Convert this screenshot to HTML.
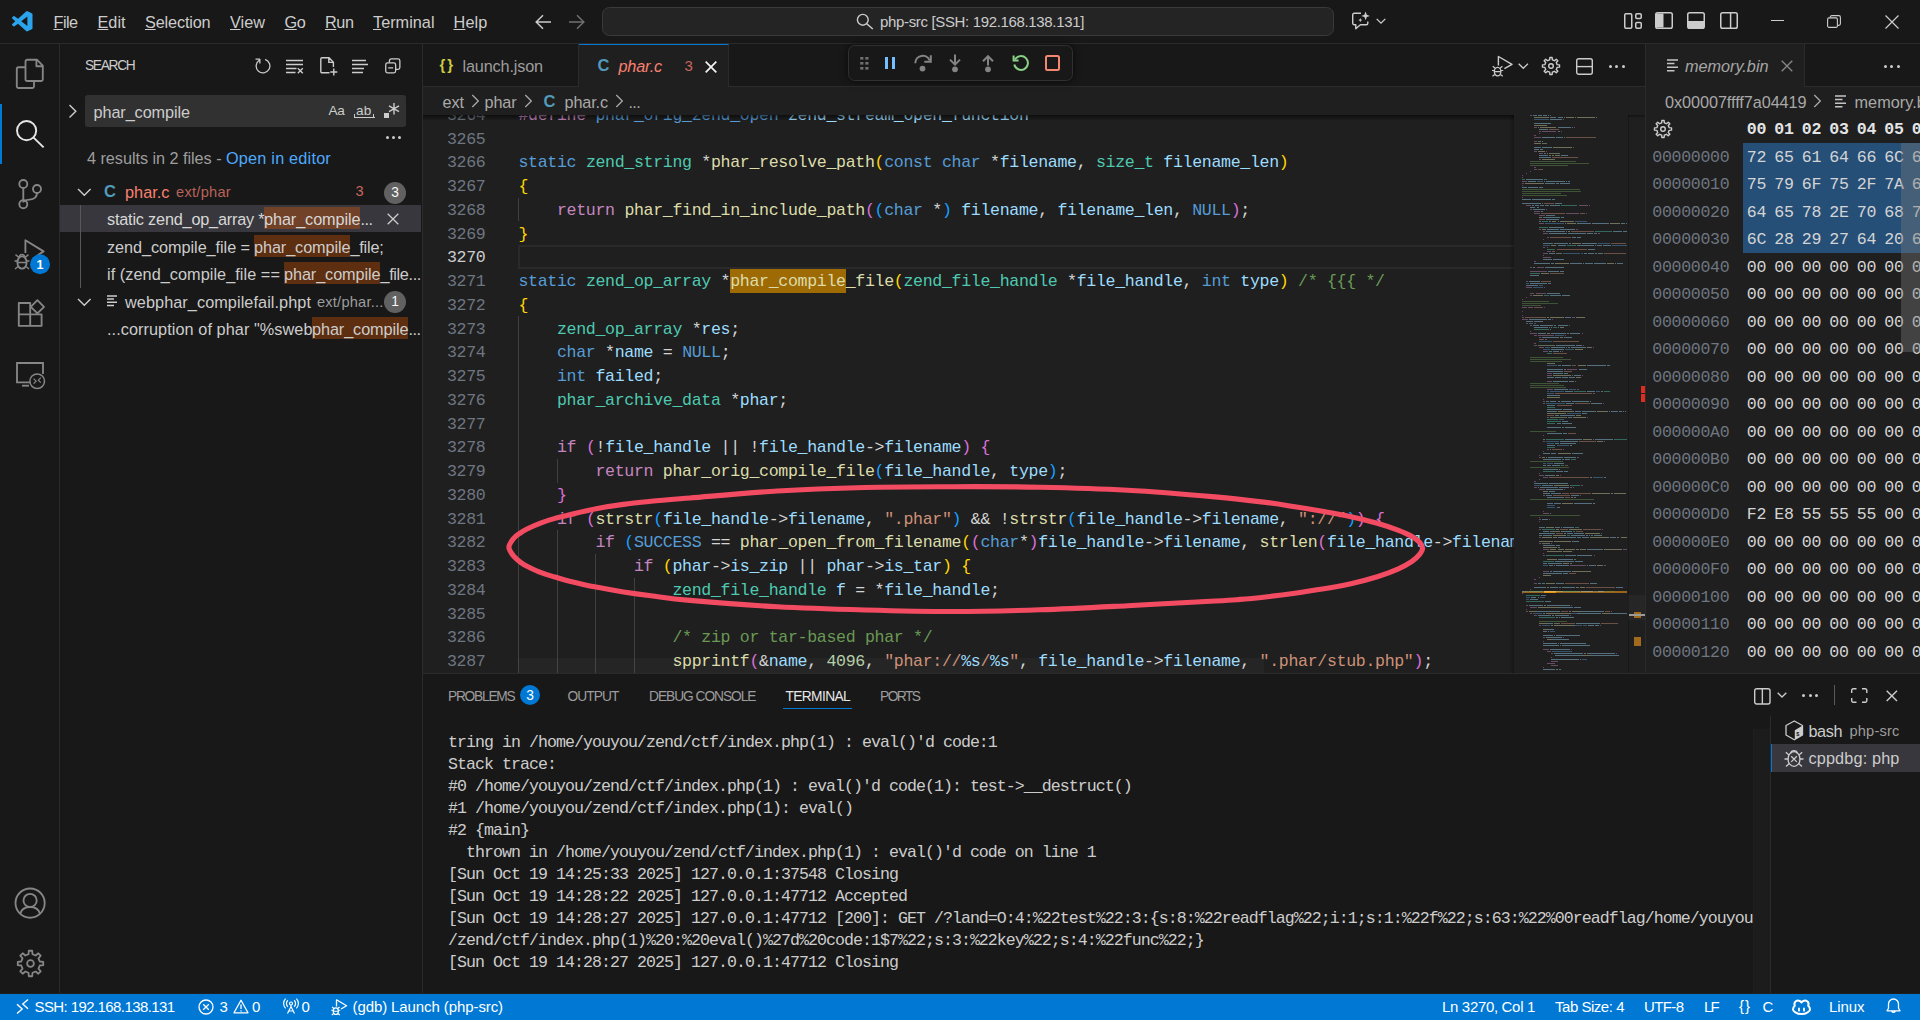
<!DOCTYPE html>
<html><head><meta charset="utf-8"><title>phar.c - php-src</title>
<style>
html,body{margin:0;padding:0;width:1920px;height:1020px;overflow:hidden;background:#1f1f1f}
body{font-family:"Liberation Sans",sans-serif;color:#ccc;font-size:16.25px;position:relative}
*{box-sizing:border-box}
.a{position:absolute}
.t{position:absolute;white-space:pre;height:28px;line-height:28px}
.m{font-family:"Liberation Mono",monospace}
svg{position:absolute;overflow:visible}
.k{color:#569cd6}.ty{color:#4ec9b0}.f{color:#dcdcaa}.v{color:#9cdcfe}.c{color:#c586c0}.s{color:#ce9178}.n{color:#b5cea8}.cm{color:#6a9955}
.b1{color:#ffd700}.b2{color:#da70d6}.b3{color:#179fff}
.ln{position:absolute;left:423px;width:62.5px;text-align:right;color:#6e7681}
.cl{position:absolute;left:518.5px;white-space:pre;color:#ccc}
.code{font-family:"Liberation Mono",monospace;font-size:16.6px;letter-spacing:-0.335px;line-height:23.75px}
.code div{height:23.75px}
</style></head><body>
<!-- TITLE BAR -->
<div class="a" style="left:0;top:0;width:1920px;height:44px;background:#181818;border-bottom:1px solid #2b2b2b"></div>
<svg style="left:12px;top:11px" width="20.5" height="20.5" viewBox="0 0 24 24"><path fill="#2aa4ec" d="M23.15 2.587L18.21.21a1.494 1.494 0 0 0-1.705.29l-9.46 8.63-4.12-3.128a.999.999 0 0 0-1.276.057L.327 7.261A1 1 0 0 0 .326 8.74L3.899 12 .326 15.26a1 1 0 0 0 .001 1.479L1.65 17.94a.999.999 0 0 0 1.276.057l4.12-3.128 9.46 8.63a1.492 1.492 0 0 0 1.704.29l4.942-2.377A1.5 1.5 0 0 0 24 20.06V3.939a1.5 1.5 0 0 0-.85-1.352zm-5.146 14.861L10.826 12l7.178-5.448v10.896z"></path></svg>
<span class="t" style="left: 53.5px; top: 8px; letter-spacing: -0.551px;"><u>F</u>ile</span>
<span class="t" style="left: 97.5px; top: 8px; letter-spacing: -0.004px;"><u>E</u>dit</span>
<span class="t" style="left: 145px; top: 8px; letter-spacing: -0.151px;"><u>S</u>election</span>
<span class="t" style="left: 230px; top: 8px; letter-spacing: 0.016px;"><u>V</u>iew</span>
<span class="t" style="left: 284.5px; top: 8px; letter-spacing: -0.344px;"><u>G</u>o</span>
<span class="t" style="left: 325px; top: 8px; letter-spacing: -0.443px;"><u>R</u>un</span>
<span class="t" style="left: 373px; top: 8px; letter-spacing: 0.012px;"><u>T</u>erminal</span>
<span class="t" style="left: 453.5px; top: 8px; letter-spacing: 0.141px;"><u>H</u>elp</span>
<!-- nav arrows -->
<svg style="left:535px;top:14px" width="17" height="16" viewBox="0 0 17 16"><path d="M1.2 8H16M8 1.2L1.2 8 8 14.8" fill="none" stroke="#ccc" stroke-width="1.5"></path></svg>
<svg style="left:567.5px;top:14px" width="17" height="16" viewBox="0 0 17 16"><path d="M1 8H15.8M9 1.2L15.8 8 9 14.8" fill="none" stroke="#707070" stroke-width="1.5"></path></svg>
<!-- command center -->
<div class="a" style="left:602px;top:7px;width:732px;height:29px;background:#242424;border:1px solid #3a3a3a;border-radius:7.5px"></div>
<svg style="left:856px;top:13px" width="18" height="17" viewBox="0 0 18 17"><circle cx="6.8" cy="6.8" r="5.4" fill="none" stroke="#ccc" stroke-width="1.4"></circle><path d="M10.7 10.7L16.8 16" stroke="#ccc" stroke-width="1.5" fill="none"></path></svg>
<span class="t" style="left: 880px; top: 7.5px; font-size: 15px; letter-spacing: -0.344px;">php-src [SSH: 192.168.138.131]</span>
<!-- copilot chat icon -->
<svg style="left:1351px;top:11px" width="20" height="20" viewBox="0 0 20 20"><path d="M10 2.2H3.2a1.5 1.5 0 0 0-1.5 1.5v8.6a1.5 1.5 0 0 0 1.5 1.5h1.6v3.9l4.6-3.9h5.9a1.5 1.5 0 0 0 1.5-1.5v-1.8" fill="none" stroke="#ccc" stroke-width="1.4" stroke-linejoin="round"></path><path d="M14.6 0.6l1.2 3.1 3.1 1.2-3.1 1.2-1.2 3.1-1.2-3.1-3.1-1.2 3.1-1.2z" fill="#ccc"></path><path d="M9.3 7l.6 1.5 1.5.6-1.5.6-.6 1.5-.6-1.5-1.5-.6 1.5-.6z" fill="#ccc"></path></svg>
<svg style="left:1376px;top:18px" width="10" height="7" viewBox="0 0 10 7"><path d="M.7.9L5 5.2 9.3.9" fill="none" stroke="#ccc" stroke-width="1.3"></path></svg>
<!-- layout controls -->
<svg style="left:1623.5px;top:12.5px" width="18" height="16" viewBox="0 0 18 16"><rect x=".75" y=".75" width="7" height="14.5" rx="1.2" fill="none" stroke="#ccc" stroke-width="1.5"></rect><rect x="11.75" y=".75" width="5.5" height="4.8" rx="1.2" fill="none" stroke="#ccc" stroke-width="1.5"></rect><rect x="11.75" y="9.4" width="5.5" height="5.8" rx="1.2" fill="none" stroke="#ccc" stroke-width="1.5"></rect></svg>
<svg style="left:1655px;top:11.8px" width="18" height="17" viewBox="0 0 18 17"><rect x=".75" y=".75" width="16.5" height="15.5" rx="1.8" fill="none" stroke="#ccc" stroke-width="1.5"></rect><path d="M1 1.5h7.5v14H1z" fill="#ccc"></path></svg>
<svg style="left:1687px;top:11.8px" width="18" height="17" viewBox="0 0 18 17"><rect x=".75" y=".75" width="16.5" height="15.5" rx="1.8" fill="none" stroke="#ccc" stroke-width="1.5"></rect><path d="M1 9h16v7H1z" fill="#ccc"></path></svg>
<svg style="left:1720px;top:11.8px" width="18" height="17" viewBox="0 0 18 17"><rect x=".75" y=".75" width="16.5" height="15.5" rx="1.8" fill="none" stroke="#ccc" stroke-width="1.5"></rect><path d="M10.6 1v15" stroke="#ccc" stroke-width="1.5"></path></svg>
<!-- window controls -->
<div class="a" style="left:1771px;top:20px;width:13px;height:1.3px;background:#ccc"></div>
<svg style="left:1826.5px;top:15px" width="14" height="13" viewBox="0 0 14 13"><rect x=".6" y="2.9" width="9.8" height="9.5" rx="1.5" fill="none" stroke="#ccc" stroke-width="1.1"></rect><path d="M3.2 2.6V2.2A1.6 1.6 0 0 1 4.8.6h7a1.6 1.6 0 0 1 1.6 1.6v6.6a1.6 1.6 0 0 1-1.6 1.6h-.9" fill="none" stroke="#ccc" stroke-width="1.1"></path></svg>
<svg style="left:1885px;top:15px" width="14" height="14" viewBox="0 0 14 14"><path d="M.5.5l13 13M13.5.5l-13 13" stroke="#ccc" stroke-width="1.2" fill="none"></path></svg>
<!-- ACTIVITY BAR -->
<div class="a" style="left:0;top:44px;width:60px;height:949px;background:#181818;border-right:1px solid #2b2b2b"></div>
<div class="a" style="left:0;top:104px;width:2px;height:60px;background:#0078d4"></div>
<!-- files -->
<svg style="left:14px;top:57px" width="32" height="34" viewBox="0 0 32 34"><path d="M11.5 9.5V4.5a1.8 1.8 0 0 1 1.8-1.8h9.6l5.9 5.9v13.6a1.8 1.8 0 0 1-1.8 1.8H13.3a1.8 1.8 0 0 1-1.8-1.8z M22.4 3v6.2h6.2" fill="none" stroke="#868686" stroke-width="1.85" stroke-linejoin="round"></path><path d="M11.3 10.2H4.6a1.8 1.8 0 0 0-1.8 1.8v17.2A1.8 1.8 0 0 0 4.6 31h13.6a1.8 1.8 0 0 0 1.8-1.8v-5" fill="none" stroke="#868686" stroke-width="1.85" stroke-linejoin="round"></path></svg>
<!-- search -->
<svg style="left:14px;top:118px" width="32" height="32" viewBox="0 0 32 32"><circle cx="12.6" cy="12.6" r="9.6" fill="none" stroke="#e7e7e7" stroke-width="1.9"></circle><path d="M19.6 19.6L29.6 29.4" stroke="#e7e7e7" stroke-width="1.9" fill="none"></path></svg>
<!-- scm -->
<svg style="left:14px;top:176px" width="32" height="36" viewBox="0 0 32 36"><circle cx="9.3" cy="8" r="4" fill="none" stroke="#868686" stroke-width="1.85"></circle><circle cx="9.3" cy="28.2" r="4" fill="none" stroke="#868686" stroke-width="1.85"></circle><circle cx="23" cy="13" r="4" fill="none" stroke="#868686" stroke-width="1.85"></circle><path d="M9.3 12v12.2M23 17c0 4.5-3 6.3-7.5 6.6-3.5.2-6.200 .9-6.200 3" fill="none" stroke="#868686" stroke-width="1.85"></path></svg>
<!-- debug -->
<svg style="left:12px;top:236px" width="40" height="40" viewBox="0 0 40 40"><path d="M13.4 17V4.200L31.600 15.400l-6 3.800" fill="none" stroke="#868686" stroke-width="1.85" stroke-linejoin="round"></path><ellipse cx="10" cy="26.500" rx="4.600" ry="6.200" fill="none" stroke="#868686" stroke-width="1.85"></ellipse><path d="M5.400 26.500h9.200M7 21.500l-3.500-2.800M13 21.500l3.500-2.800M5.400 25H2.500M14.600 25h2.900M6 30.500l-3 2.500M14 30.500l3 2.500M7.300 20.600a2.800 2.800 0 0 1 5.400 0" fill="none" stroke="#868686" stroke-width="1.5"></path><circle cx="28" cy="28.200" r="10" fill="#0078d4"></circle></svg>
<span class="t" style="left:30px;top:250.500px;width:20px;text-align:center;font-size:12.500px;font-weight:bold;color:#fff">1</span>
<!-- extensions -->
<svg style="left:16px;top:298px" width="30" height="30" viewBox="0 0 30 30"><path d="M2.800 5h11.400v11.400H2.800zM2.800 16.400h11.400v11.400H2.800zM14.200 16.400h11.400v11.400H14.200z" fill="none" stroke="#868686" stroke-width="1.85" stroke-linejoin="round"></path><path d="M21.400 2.200l6.600 6.600-6.600 6.600-6.600-6.600z" fill="none" stroke="#868686" stroke-width="1.85" stroke-linejoin="round"></path></svg>
<!-- remote explorer -->
<svg style="left:14px;top:360px" width="34" height="32" viewBox="0 0 34 32"><path d="M22 22.400H3V3h26v11" fill="none" stroke="#868686" stroke-width="1.85"></path><path d="M8 25.700h7" stroke="#868686" stroke-width="1.85"></path><circle cx="23.200" cy="21.200" r="7.300" fill="#181818" stroke="#868686" stroke-width="1.500"></circle><path d="M19.600 18.700l2.500 2.500-2.500 2.500M26.800 17.700l-2.500 2.500 2.500 2.500" fill="none" stroke="#868686" stroke-width="1.200"></path></svg>
<!-- account -->
<svg style="left:14px;top:887px" width="32" height="32" viewBox="0 0 32 32"><circle cx="16.100" cy="16.100" r="14.600" fill="none" stroke="#868686" stroke-width="1.850"></circle><circle cx="16.100" cy="13.400" r="6.600" fill="none" stroke="#868686" stroke-width="1.850"></circle><path d="M6.200 26.600c1.500-4.600 5.300-6.600 9.900-6.600s8.400 2 9.900 6.600" fill="none" stroke="#868686" stroke-width="1.850"></path></svg>
<!-- gear -->
<svg style="left:15.500px;top:948.500px" width="29" height="29" viewBox="0 0 30 30"><path d="M12.940 5.420 L13.230 1.820 L16.770 1.820 L17.060 5.420 L20.320 6.770 L23.070 4.430 L25.570 6.930 L23.230 9.680 L24.580 12.940 L28.180 13.230 L28.180 16.770 L24.580 17.060 L23.230 20.320 L25.570 23.070 L23.070 25.570 L20.320 23.230 L17.060 24.580 L16.770 28.180 L13.230 28.180 L12.940 24.580 L9.680 23.230 L6.930 25.570 L4.430 23.070 L6.770 20.320 L5.420 17.060 L1.820 16.770 L1.820 13.230 L5.420 12.940 L6.770 9.680 L4.430 6.930 L6.930 4.430 L9.680 6.770Z" fill="none" stroke="#868686" stroke-width="1.850" stroke-linejoin="round"></path><circle cx="15" cy="15" r="3.500" fill="none" stroke="#868686" stroke-width="1.850"></circle></svg>
<!-- SIDEBAR -->
<div class="a" style="left:60px;top:44px;width:363px;height:949px;background:#181818;border-right:1px solid #2b2b2b"></div>
<span class="t" style="left: 85px; top: 52px; font-size: 13.75px; letter-spacing: -1.302px;">SEARCH</span>
<!-- header icons -->
<svg style="left:253px;top:56px" width="20" height="20" viewBox="0 0 16 16"><path fill="#ccc" d="M4.681 3H2V2h3.5l.5.5V6H5V4a5 5 0 1 0 4.53-.761l.302-.954A6 6 0 1 1 4.681 3z"></path></svg>
<svg style="left:286px;top:59px" width="18" height="15" viewBox="0 0 18 15"><path d="M0 1.500h17M0 5.500h17M0 9.500h10.500M0 13.500h9.500M11.800 9.200l5 5M16.800 9.200l-5 5" fill="none" stroke="#ccc" stroke-width="1.400"></path></svg>
<svg style="left:320px;top:57px" width="18" height="19" viewBox="0 0 18 19"><path d="M9.500 15.800H2a1.200 1.200 0 0 1-1.200-1.200V2A1.200 1.200 0 0 1 2 .8h7l4.400 4.400V10M8.800 1v4.400h4.400M13.800 11.500v7M10.300 15h7" fill="none" stroke="#ccc" stroke-width="1.400"></path></svg>
<svg style="left:352px;top:59px" width="17" height="15" viewBox="0 0 17 15"><path d="M0 1.500h14M0 5.500h16M0 9.500h12M0 13.500h11" fill="none" stroke="#ccc" stroke-width="1.400"></path></svg>
<svg style="left:385px;top:58.300px" width="15.600" height="15.600" viewBox="0 0 17 17"><rect x=".8" y="5.400" width="10.800" height="10.800" rx="2" fill="none" stroke="#ccc" stroke-width="1.400"></rect><path d="M4.800 5V3A2 2 0 0 1 6.800 1h7.400a2 2 0 0 1 2 2v7.400a2 2 0 0 1-2 2h-2.200M3.500 10.800h5.400" fill="none" stroke="#ccc" stroke-width="1.400"></path></svg>
<!-- toggle chevron -->
<svg style="left:68px;top:104px" width="10" height="15" viewBox="0 0 10 15"><path d="M1.500 1l6.300 6.300L1.500 13.600" fill="none" stroke="#ccc" stroke-width="1.400"></path></svg>
<!-- input -->
<div class="a" style="left:85px;top:95px;width:321px;height:32px;background:#313131;border-radius:3px"></div>
<span class="t" style="left: 93.5px; top: 98px; letter-spacing: -0.089px;">phar_compile</span>
<span class="t" style="left: 328.5px; top: 97px; font-size: 13.6px; letter-spacing: -0.42px;">Aa</span>
<span class="t" style="left: 356px; top: 96.5px; font-size: 13.6px; letter-spacing: 0.188px;">ab</span>
<div class="a" style="left:353.500px;top:117px;width:21px;height:1.300px;background:#ccc"></div>
<div class="a" style="left:353.500px;top:113.500px;width:1.300px;height:4px;background:#ccc"></div>
<div class="a" style="left:373.200px;top:113.500px;width:1.300px;height:4px;background:#ccc"></div>
<div class="a" style="left:383.500px;top:113px;width:5px;height:5px;background:#ccc"></div>
<svg style="left:388px;top:103px" width="12" height="12" viewBox="0 0 12 12"><path d="M6 0v11.500M1 2.900l10 5.700M11 2.900L1 8.600" stroke="#ccc" stroke-width="1.400" fill="none"></path></svg>
<div class="a" style="left:385.500px;top:136px;width:3px;height:3px;border-radius:2px;background:#ccc"></div>
<div class="a" style="left:391.700px;top:136px;width:3px;height:3px;border-radius:2px;background:#ccc"></div>
<div class="a" style="left:397.900px;top:136px;width:3px;height:3px;border-radius:2px;background:#ccc"></div>
<!-- message -->
<span class="t" style="left: 87px; top: 143.5px; color: rgb(157, 157, 157); letter-spacing: -0.043px;">4 results in 2 files - </span>
<span class="t" style="left: 226px; top: 143.5px; color: rgb(77, 170, 252); letter-spacing: 0.208px;">Open in editor</span>
<!-- tree -->
<div class="a" style="left:60px;top:205px;width:361px;height:26.700px;background:#37373d"></div>
<div class="a" style="left:80px;top:205px;width:1px;height:82.500px;background:#585858"></div>
<svg style="left:77px;top:187.500px" width="15" height="9" viewBox="0 0 15 9"><path d="M1 1l6.300 6.300L13.600 1" fill="none" stroke="#ccc" stroke-width="1.400"></path></svg>
<span class="t" style="left: 104px; top: 176.5px; font-weight: bold; color: rgb(81, 154, 186); font-size: 16.5px; letter-spacing: -0.922px;">C</span>
<span class="t" style="left: 125px; top: 177.5px; color: rgb(248, 128, 112); letter-spacing: 0.036px;">phar.c</span>
<span class="t" style="left: 176px; top: 178px; color: rgb(184, 99, 90); font-size: 14.6px; letter-spacing: 0.283px;">ext/phar</span>
<span class="t" style="left: 355.5px; top: 176.5px; color: rgb(201, 103, 93); font-size: 14.6px; letter-spacing: 0.875px;">3</span>
<div class="a" style="left:384px;top:181.700px;width:22px;height:22px;border-radius:11px;background:#616161"></div>
<span class="t" style="left:384px;top:178.700px;width:22px;text-align:center;color:#f8f8f8;font-size:13.750px">3</span>
<!-- row1 -->
<div class="a" style="left:264px;top:207px;width:96px;height:22px;background:rgba(234,92,0,0.33)"></div>
<span class="t" style="left: 107px; top: 205px; color: rgb(215, 215, 215); letter-spacing: -0.191px;">static zend_op_array *</span>
<span class="t" style="left: 264px; top: 205px; color: rgb(215, 215, 215); letter-spacing: -0.089px;">phar_compile</span>
<span class="t" style="left: 360.5px; top: 205px; color: rgb(215, 215, 215); letter-spacing: -0.516px;">...</span>
<svg style="left:387px;top:213px" width="12" height="12" viewBox="0 0 12 12"><path d="M.7.7l10.600 10.600M11.300.7L.7 11.300" stroke="#ccc" stroke-width="1.300" fill="none"></path></svg>
<!-- row2 -->
<div class="a" style="left:254px;top:234.500px;width:96px;height:22px;background:rgba(234,92,0,0.33)"></div>
<span class="t" style="left: 107px; top: 232.5px; letter-spacing: -0.055px;">zend_compile_file = </span>
<span class="t" style="left: 254px; top: 232.5px; letter-spacing: -0.089px;">phar_compile</span>
<span class="t" style="left: 350.5px; top: 232.5px; letter-spacing: -0.221px;">_file;</span>
<!-- row3 -->
<div class="a" style="left:284px;top:262px;width:96px;height:22px;background:rgba(234,92,0,0.33)"></div>
<span class="t" style="left: 107px; top: 260px; letter-spacing: 0.054px;">if (zend_compile_file == </span>
<span class="t" style="left: 284px; top: 260px; letter-spacing: -0.089px;">phar_compile</span>
<span class="t" style="left: 380.5px; top: 260px; letter-spacing: -0.357px;">_file...</span>
<!-- row4 -->
<svg style="left:77px;top:297.500px" width="15" height="9" viewBox="0 0 15 9"><path d="M1 1l6.300 6.300L13.600 1" fill="none" stroke="#ccc" stroke-width="1.400"></path></svg>
<svg style="left:107px;top:295px" width="11" height="12" viewBox="0 0 11 12"><path d="M0 .9h10M0 4.100h7M0 7.300h10M0 10.500h7" stroke="#ccc" stroke-width="1.500" fill="none"></path></svg>
<span class="t" style="left: 125px; top: 287.5px; letter-spacing: 0.072px;">webphar_compilefail.phpt</span>
<span class="t" style="left: 317px; top: 288px; color: rgb(157, 157, 157); font-size: 14.6px; letter-spacing: 0.219px;">ext/phar...</span>
<div class="a" style="left:384px;top:291.400px;width:22px;height:22px;border-radius:11px;background:#616161"></div>
<span class="t" style="left:384px;top:288px;width:22px;text-align:center;color:#f8f8f8;font-size:13.750px">1</span>
<!-- row5 -->
<div class="a" style="left:312px;top:317px;width:96px;height:22px;background:rgba(234,92,0,0.33)"></div>
<span class="t" style="left: 107px; top: 315px; letter-spacing: 0.069px;">...corruption of phar "%sweb</span>
<span class="t" style="left: 312px; top: 315px; letter-spacing: -0.089px;">phar_compile</span>
<span class="t" style="left: 408.5px; top: 315px; letter-spacing: -0.516px;">...</span>
<!-- EDITOR GROUP 1 CHROME -->
<div class="a" style="left:423px;top:44px;width:1222px;height:43px;background:#181818;border-bottom:1px solid #2b2b2b"></div>
<div class="a" style="left:1645px;top:44px;width:1px;height:629px;background:#2b2b2b"></div>
<!-- tab launch.json -->
<div class="a" style="left:578px;top:44px;width:1px;height:42px;background:#2b2b2b"></div>
<span class="t" style="left:439.500px;top:50.500px;color:#cbcb41;font-weight:bold;font-size:15px;letter-spacing:1.800px">{}</span>
<span class="t" style="left: 462.5px; top: 52px; color: rgb(157, 157, 157); letter-spacing: -0.156px;">launch.json</span>
<!-- tab phar.c -->
<div class="a" style="left:579px;top:44px;width:150px;height:43px;background:#1f1f1f;border-top:1px solid #0078d4;border-right:1px solid #2b2b2b"></div>
<span class="t" style="left: 597.5px; top: 51px; font-weight: bold; color: rgb(81, 154, 186); font-size: 16.5px; letter-spacing: -0.922px;">C</span>
<span class="t" style="left: 618.5px; top: 52px; color: rgb(248, 128, 112); font-style: italic; letter-spacing: -0.177px;">phar.c</span>
<span class="t" style="left: 684.5px; top: 51.5px; color: rgb(201, 103, 93); font-size: 15px; letter-spacing: 0.656px;">3</span>
<svg style="left:705px;top:60.500px" width="12" height="12" viewBox="0 0 12 12"><path d="M.7.7l10.600 10.600M11.300.7L.7 11.300" stroke="#f4f4f4" stroke-width="1.700" fill="none"></path></svg>
<!-- debug toolbar -->
<div class="a" style="left:848px;top:44.500px;width:225px;height:36.500px;background:#181818;border:1px solid #303030;border-radius:6.500px;box-shadow:0 0 7px 1px rgba(0,0,0,0.5)"></div>
<svg style="left:859.500px;top:57px" width="9" height="13" viewBox="0 0 9 13"><g fill="#6f6f6f"><rect x=".2" y="0" width="3.200" height="2.600"></rect><rect x="5.300" y="0" width="3.200" height="2.600"></rect><rect x=".2" y="5" width="3.200" height="2.600"></rect><rect x="5.300" y="5" width="3.200" height="2.600"></rect><rect x=".2" y="10" width="3.200" height="2.600"></rect><rect x="5.300" y="10" width="3.200" height="2.600"></rect></g></svg>
<div class="a" style="left:885.200px;top:57px;width:2.600px;height:12px;background:#75beff"></div>
<div class="a" style="left:892.400px;top:57px;width:2.600px;height:12px;background:#75beff"></div>
<!-- step over -->
<svg style="left:913px;top:53px" width="20" height="20" viewBox="0 0 20 20"><path d="M2.300 10.200A7.400 7.400 0 0 1 16.600 7.500" fill="none" stroke="#848484" stroke-width="2"></path><path d="M17.800 2.300v6.500h-6.500" fill="none" stroke="#848484" stroke-width="2"></path><circle cx="9.500" cy="15.600" r="2.900" fill="#848484"></circle></svg>
<!-- step into -->
<svg style="left:947.750px;top:53px" width="14" height="20" viewBox="0 0 14 20"><path d="M7 1.500v9.500M2 6.600L7 11.600l5-5" fill="none" stroke="#848484" stroke-width="2"></path><circle cx="7" cy="16.300" r="2.900" fill="#848484"></circle></svg>
<!-- step out -->
<svg style="left:980.500px;top:53px" width="14" height="20" viewBox="0 0 14 20"><path d="M7 12.600V3.200M2 8.200L7 3.200l5 5" fill="none" stroke="#848484" stroke-width="2"></path><circle cx="7" cy="16.300" r="2.900" fill="#848484"></circle></svg>
<!-- restart -->
<svg style="left:1010.500px;top:53px" width="20" height="20" viewBox="0 0 20 20"><path d="M4 6.600A6.900 6.900 0 1 1 3.300 11.500" fill="none" stroke="#89d185" stroke-width="2"></path><path d="M2.600 2.600v5h5" fill="none" stroke="#89d185" stroke-width="2"></path></svg>
<!-- stop -->
<div class="a" style="left:1044.750px;top:55px;width:15.500px;height:15.700px;border:2px solid #f48771;border-radius:2.500px"></div>
<!-- editor actions -->
<svg style="left:1490px;top:54px" width="24" height="24" viewBox="0 0 24 24"><path d="M8.400 11.500V2.500L22 10.300l-7.600 4.400" fill="none" stroke="#ccc" stroke-width="1.400" stroke-linejoin="round"></path><ellipse cx="7.600" cy="17.600" rx="3.300" ry="4.300" fill="none" stroke="#ccc" stroke-width="1.300"></ellipse><path d="M4.300 17.600h6.600M5.200 14.200l-2.400-2M10 14.200l2.400-2M4.300 16.500H2M10.900 16.500h2.300M4.800 20.500l-2.300 1.800M10.400 20.500l2.300 1.800" fill="none" stroke="#ccc" stroke-width="1.200"></path></svg>
<svg style="left:1517.500px;top:62.500px" width="11" height="7" viewBox="0 0 11 7"><path d="M.7.7l4.600 4.600L9.900.7" fill="none" stroke="#ccc" stroke-width="1.300"></path></svg>
<svg style="left:1541.250px;top:56px" width="20" height="20" viewBox="0 0 20 20"><path d="M8.670 3.840 L8.860 1.480 L11.140 1.480 L11.330 3.840 L13.420 4.710 L15.220 3.160 L16.840 4.780 L15.290 6.580 L16.160 8.670 L18.520 8.860 L18.520 11.140 L16.160 11.330 L15.290 13.420 L16.840 15.220 L15.220 16.840 L13.420 15.290 L11.330 16.160 L11.140 18.520 L8.860 18.520 L8.670 16.160 L6.580 15.290 L4.780 16.840 L3.160 15.220 L4.710 13.420 L3.840 11.330 L1.480 11.140 L1.480 8.860 L3.840 8.670 L4.710 6.580 L3.160 4.780 L4.780 3.160 L6.580 4.710Z" fill="none" stroke="#ccc" stroke-width="1.400" stroke-linejoin="round"></path><circle cx="10" cy="10" r="2.300" fill="none" stroke="#ccc" stroke-width="1.400"></circle></svg>
<svg style="left:1576px;top:58px" width="17" height="17" viewBox="0 0 17 17"><rect x=".7" y=".7" width="15.600" height="15.600" rx="2" fill="none" stroke="#ccc" stroke-width="1.400"></rect><path d="M.7 8.600h15.600" stroke="#ccc" stroke-width="1.400"></path></svg>
<div class="a" style="left:1608.500px;top:64.500px;width:3px;height:3px;border-radius:2px;background:#ccc"></div>
<div class="a" style="left:1615px;top:64.500px;width:3px;height:3px;border-radius:2px;background:#ccc"></div>
<div class="a" style="left:1621.500px;top:64.500px;width:3px;height:3px;border-radius:2px;background:#ccc"></div>
<!-- breadcrumbs -->
<span class="t" style="left: 442.5px; top: 87.8px; color: rgb(169, 169, 169); letter-spacing: -0.063px;">ext</span>
<svg style="left:470.500px;top:94.300px" width="9" height="14" viewBox="0 0 9 14"><path d="M1.300 1l6 6-6 6" fill="none" stroke="#a9a9a9" stroke-width="1.300"></path></svg>
<span class="t" style="left: 484.5px; top: 87.8px; color: rgb(169, 169, 169); letter-spacing: -0.133px;">phar</span>
<svg style="left:523.500px;top:94.300px" width="9" height="14" viewBox="0 0 9 14"><path d="M1.300 1l6 6-6 6" fill="none" stroke="#a9a9a9" stroke-width="1.300"></path></svg>
<span class="t" style="left: 543.5px; top: 86.8px; font-weight: bold; color: rgb(81, 154, 186); font-size: 16.5px; letter-spacing: -0.922px;">C</span>
<span class="t" style="left: 564.5px; top: 87.8px; color: rgb(169, 169, 169); letter-spacing: -0.13px;">phar.c</span>
<svg style="left:614.500px;top:94.300px" width="9" height="14" viewBox="0 0 9 14"><path d="M1.300 1l6 6-6 6" fill="none" stroke="#a9a9a9" stroke-width="1.300"></path></svg>
<span class="t" style="left: 628.5px; top: 87.8px; color: rgb(169, 169, 169); letter-spacing: -0.682px;">...</span>
<!-- CODE AREA -->
<div class="a code" style="left:423px;top:115px;width:1091px;height:558px;overflow:hidden;background:#1f1f1f">
<div class="a" style="left:95px;top:130.00px;width:1000px;height:23.75px;border:2px solid #2a2a2a;border-right:none"></div>
<div class="a" style="left:306.75px;top:153.75px;width:116.00px;height:23.75px;background:#9e6a03"></div>
<div class="a" style="left:95.00px;top:82.50px;width:1px;height:23.75px;background:#404040"></div>
<div class="a" style="left:95.00px;top:201.25px;width:1px;height:380.00px;background:#404040"></div>
<div class="a" style="left:133.50px;top:343.75px;width:1px;height:23.75px;background:#404040"></div>
<div class="a" style="left:133.50px;top:415.00px;width:1px;height:166.25px;background:#404040"></div>
<div class="a" style="left:172.00px;top:438.75px;width:1px;height:142.50px;background:#404040"></div>
<div class="a" style="left:210.50px;top:462.50px;width:1px;height:118.75px;background:#404040"></div>
<div class="a" style="left:95px;top:543px;width:746px;height:15px;background:rgba(121,121,121,0.08)"></div>
<div class="ln" style="left:0;top:-11.25px;color:#6e7681">3264</div>
<div class="cl" style="left:95.5px;top:-11.25px;color:#d4d4d4"><span class="c">#define</span> <span class="k">phar_orig_zend_open</span> <span class="v">zend_stream_open_function</span></div>
<div class="ln" style="left:0;top:12.50px;color:#6e7681">3265</div>
<div class="ln" style="left:0;top:36.25px;color:#6e7681">3266</div>
<div class="cl" style="left:95.5px;top:36.25px;color:#d4d4d4"><span class="k">static</span> <span class="ty">zend_string</span> *<span class="f">phar_resolve_path</span><span class="b1">(</span><span class="k">const</span> <span class="k">char</span> *<span class="v">filename</span>, <span class="ty">size_t</span> <span class="v">filename_len</span><span class="b1">)</span></div>
<div class="ln" style="left:0;top:60.00px;color:#6e7681">3267</div>
<div class="cl" style="left:95.5px;top:60.00px;color:#d4d4d4"><span class="b1">{</span></div>
<div class="ln" style="left:0;top:83.75px;color:#6e7681">3268</div>
<div class="cl" style="left:95.5px;top:83.75px;color:#d4d4d4">    <span class="c">return</span> <span class="f">phar_find_in_include_path</span><span class="b2">(</span><span class="b3">(</span><span class="k">char</span> *<span class="b3">)</span> <span class="v">filename</span>, <span class="v">filename_len</span>, <span class="k">NULL</span><span class="b2">)</span>;</div>
<div class="ln" style="left:0;top:107.50px;color:#6e7681">3269</div>
<div class="cl" style="left:95.5px;top:107.50px;color:#d4d4d4"><span class="b1">}</span></div>
<div class="ln" style="left:0;top:131.25px;color:#ccc">3270</div>
<div class="ln" style="left:0;top:155.00px;color:#6e7681">3271</div>
<div class="cl" style="left:95.5px;top:155.00px;color:#d4d4d4"><span class="k">static</span> <span class="ty">zend_op_array</span> *<span class="f">phar_compile</span><span class="f">_file</span><span class="b1">(</span><span class="ty">zend_file_handle</span> *<span class="v">file_handle</span>, <span class="k">int</span> <span class="v">type</span><span class="b1">)</span> <span class="cm">/* {{{ */</span></div>
<div class="ln" style="left:0;top:178.75px;color:#6e7681">3272</div>
<div class="cl" style="left:95.5px;top:178.75px;color:#d4d4d4"><span class="b1">{</span></div>
<div class="ln" style="left:0;top:202.50px;color:#6e7681">3273</div>
<div class="cl" style="left:95.5px;top:202.50px;color:#d4d4d4">    <span class="ty">zend_op_array</span> *<span class="v">res</span>;</div>
<div class="ln" style="left:0;top:226.25px;color:#6e7681">3274</div>
<div class="cl" style="left:95.5px;top:226.25px;color:#d4d4d4">    <span class="k">char</span> *<span class="v">name</span> = <span class="k">NULL</span>;</div>
<div class="ln" style="left:0;top:250.00px;color:#6e7681">3275</div>
<div class="cl" style="left:95.5px;top:250.00px;color:#d4d4d4">    <span class="k">int</span> <span class="v">failed</span>;</div>
<div class="ln" style="left:0;top:273.75px;color:#6e7681">3276</div>
<div class="cl" style="left:95.5px;top:273.75px;color:#d4d4d4">    <span class="ty">phar_archive_data</span> *<span class="v">phar</span>;</div>
<div class="ln" style="left:0;top:297.50px;color:#6e7681">3277</div>
<div class="ln" style="left:0;top:321.25px;color:#6e7681">3278</div>
<div class="cl" style="left:95.5px;top:321.25px;color:#d4d4d4">    <span class="c">if</span> <span class="b2">(</span>!<span class="v">file_handle</span> || !<span class="v">file_handle</span>-&gt;<span class="v">filename</span><span class="b2">)</span> <span class="b2">{</span></div>
<div class="ln" style="left:0;top:345.00px;color:#6e7681">3279</div>
<div class="cl" style="left:95.5px;top:345.00px;color:#d4d4d4">        <span class="c">return</span> <span class="f">phar_orig_compile_file</span><span class="b3">(</span><span class="v">file_handle</span>, <span class="v">type</span><span class="b3">)</span>;</div>
<div class="ln" style="left:0;top:368.75px;color:#6e7681">3280</div>
<div class="cl" style="left:95.5px;top:368.75px;color:#d4d4d4">    <span class="b2">}</span></div>
<div class="ln" style="left:0;top:392.50px;color:#6e7681">3281</div>
<div class="cl" style="left:95.5px;top:392.50px;color:#d4d4d4">    <span class="c">if</span> <span class="b2">(</span><span class="f">strstr</span><span class="b3">(</span><span class="v">file_handle</span>-&gt;<span class="v">filename</span>, <span class="s">".phar"</span><span class="b3">)</span> &amp;&amp; !<span class="f">strstr</span><span class="b3">(</span><span class="v">file_handle</span>-&gt;<span class="v">filename</span>, <span class="s">"://"</span><span class="b3">)</span><span class="b2">)</span> <span class="b2">{</span></div>
<div class="ln" style="left:0;top:416.25px;color:#6e7681">3282</div>
<div class="cl" style="left:95.5px;top:416.25px;color:#d4d4d4">        <span class="c">if</span> <span class="b3">(</span><span class="k">SUCCESS</span> == <span class="f">phar_open_from_filename</span><span class="b1">(</span><span class="b2">(</span><span class="k">char</span>*<span class="b2">)</span><span class="v">file_handle</span>-&gt;<span class="v">filename</span>, <span class="f">strlen</span><span class="b2">(</span><span class="v">file_handle</span>-&gt;<span class="v">filename</span><span class="b2">)</span>, <span class="k">NULL</span>, 0, &amp;<span class="v">phar</span>, <span class="k">NULL</span><span class="b1">)</span><span class="b3">)</span> <span class="b3">{</span></div>
<div class="ln" style="left:0;top:440.00px;color:#6e7681">3283</div>
<div class="cl" style="left:95.5px;top:440.00px;color:#d4d4d4">            <span class="c">if</span> <span class="b1">(</span><span class="v">phar</span>-&gt;<span class="v">is_zip</span> || <span class="v">phar</span>-&gt;<span class="v">is_tar</span><span class="b1">)</span> <span class="b1">{</span></div>
<div class="ln" style="left:0;top:463.75px;color:#6e7681">3284</div>
<div class="cl" style="left:95.5px;top:463.75px;color:#d4d4d4">                <span class="ty">zend_file_handle</span> <span class="v">f</span> = *<span class="v">file_handle</span>;</div>
<div class="ln" style="left:0;top:487.50px;color:#6e7681">3285</div>
<div class="ln" style="left:0;top:511.25px;color:#6e7681">3286</div>
<div class="cl" style="left:95.5px;top:511.25px;color:#d4d4d4">                <span class="cm">/* zip or tar-based phar */</span></div>
<div class="ln" style="left:0;top:535.00px;color:#6e7681">3287</div>
<div class="cl" style="left:95.5px;top:535.00px;color:#d4d4d4">                <span class="f">spprintf</span><span class="b2">(</span>&amp;<span class="v">name</span>, <span class="n">4096</span>, <span class="s">"phar://</span><span class="v">%s</span><span class="s">/</span><span class="v">%s</span><span class="s">"</span>, <span class="v">file_handle</span>-&gt;<span class="v">filename</span>, <span class="s">".phar/stub.php"</span><span class="b2">)</span>;</div>
<div class="ln" style="left:0;top:558.75px;color:#6e7681">3288</div>
<div class="a" style="left:0;top:0;width:1091px;height:6px;background:linear-gradient(#000,rgba(0,0,0,0));opacity:.55"></div>
</div>
<!-- MINIMAP -->
<div class="a" style="left:1509px;top:115px;width:5px;height:558px;background:linear-gradient(90deg,rgba(0,0,0,0),rgba(0,0,0,.3))"></div>
<div class="a" style="left:1514px;top:115px;width:131px;height:558px;background:#1f1f1f"></div>
<div class="a" style="left:1521.8px;top:591px;width:105.5px;height:2.2px;background:#9a6518"></div>
<div class="a" style="left:1543.7px;top:591px;width:12.5px;height:2.2px;background:#e8940c"></div>
<svg style="left:0;top:0" width="1920" height="1020" viewBox="0 0 1920 1020" shape-rendering="crispEdges">
<path d="M1521.8 591.5h6.3M1594.2 591.5h3.2M1526.0 597.5h4.2M1539.6 597.5h5.2M1526.0 599.5h3.2M1533.3 613.5h8.4M1571.1 613.5h6.3M1541.7 625.5h8.4M1575.3 625.5h6.3M1582.7 625.5h4.2M1550.1 631.5h5.2M1552.2 651.5h19.9M1581.6 659.5h5.2M1534.4 119.6h14.7M1536.5 181.6h6.3M1575.3 221.6h11.6M1544.9 223.6h18.9M1598.4 243.6h11.6M1542.8 245.6h7.4M1612.1 245.6h14.4M1562.7 253.6h16.8M1580.6 253.6h2.1M1526.0 283.6h3.2M1538.6 285.6h4.2M1533.3 287.6h9.5M1555.4 335.6h8.4M1538.6 341.6h13.7M1544.9 347.6h5.2M1542.8 349.6h7.4M1564.8 349.6h9.5M1547.0 365.6h9.5M1569.0 389.6h7.4M1547.0 391.6h2.1M1550.1 391.6h13.7M1596.3 391.6h3.2M1547.0 393.6h7.4M1545.9 403.6h18.9M1567.0 413.6h13.7M1558.5 419.6h5.2M1545.9 441.6h12.6M1547.0 443.6h7.4M1556.5 445.6h12.6M1542.8 463.6h3.2M1547.0 463.6h6.3M1593.2 477.6h9.5M1534.4 485.6h6.3M1547.0 505.6h8.4M1547.0 507.6h8.4M1542.8 565.6h5.2" stroke="#569cd6" stroke-opacity=".43" stroke-width="1.25" fill="none"></path>
<path d="M1529.1 591.5h13.7M1562.8 591.5h16.8M1526.0 595.5h13.7M1526.0 601.5h17.9M1538.6 617.5h16.8M1521.8 179.6h3.2M1543.8 179.6h3.2M1560.6 205.6h16.8M1541.7 221.6h6.3M1538.6 227.6h9.5M1595.3 231.6h16.8M1566.9 245.6h9.5M1547.0 249.6h8.4M1530.2 273.6h9.5M1543.8 295.6h5.2M1529.1 323.6h4.2M1553.3 327.6h3.2M1534.4 329.6h14.7M1547.0 353.6h5.2M1574.3 391.6h11.6M1603.7 391.6h6.3M1547.0 407.6h8.4M1547.0 419.6h10.5M1547.0 421.6h13.7M1547.0 423.6h8.4M1545.9 439.6h17.9M1614.2 439.6h12.3M1547.0 447.6h8.4M1571.1 459.6h5.2M1560.6 465.6h3.2M1542.8 471.6h12.6M1570.1 485.6h9.5M1575.3 527.6h3.2M1541.7 529.6h13.7M1573.2 531.6h2.1M1600.5 533.6h1.1M1566.9 535.6h3.2M1545.9 555.6h17.9M1542.8 561.6h11.6" stroke="#4ec9b0" stroke-opacity=".43" stroke-width="1.25" fill="none"></path>
<path d="M1543.8 591.5h18.9M1537.5 607.5h23.1M1529.1 611.5h7.4M1572.2 611.5h8.4M1545.9 613.5h25.2M1601.6 613.5h7.4M1538.6 623.5h9.5M1554.3 625.5h21.0M1542.8 629.5h5.2M1547.0 639.5h5.2M1582.7 655.5h7.4M1534.4 117.6h14.7M1565.9 117.6h8.4M1577.4 117.6h17.9M1534.4 125.6h12.6M1539.6 127.6h16.8M1541.7 141.6h1.1M1534.4 143.6h6.3M1553.3 147.6h18.9M1537.5 151.6h7.4M1552.2 155.6h2.1M1555.4 155.6h4.2M1541.7 159.6h13.7M1524.9 183.6h18.9M1538.6 217.6h3.2M1552.2 221.6h4.2M1559.6 221.6h14.7M1566.9 223.6h9.5M1610.0 223.6h9.5M1541.7 229.6h4.2M1572.2 243.6h8.4M1551.2 245.6h5.2M1555.4 263.6h13.7M1606.8 263.6h7.4M1540.7 273.6h8.4M1533.3 295.6h9.5M1547.0 317.6h2.1M1550.1 317.6h13.7M1576.4 317.6h8.4M1559.6 327.6h4.2M1547.0 333.6h3.2M1559.6 337.6h3.2M1586.9 347.6h5.2M1575.3 349.6h7.4M1547.0 363.6h8.4M1577.5 365.6h8.4M1553.3 375.6h17.9M1576.4 377.6h4.2M1547.0 397.6h12.6M1590.0 401.6h1.1M1557.5 411.6h16.8M1597.4 411.6h10.5M1547.0 413.6h18.9M1576.4 415.6h4.2M1573.2 417.6h12.6M1582.7 439.6h9.5M1597.4 441.6h5.2M1570.1 445.6h2.1M1557.5 453.6h13.7M1541.7 457.6h3.2M1556.4 475.6h2.1M1554.3 485.6h14.7M1542.8 491.6h5.2M1592.1 493.6h17.9M1614.2 493.6h11.6M1561.7 503.6h11.6M1545.9 527.6h8.4M1556.4 529.6h2.1M1569.0 529.6h12.6M1584.8 533.6h14.7M1553.3 535.6h12.6M1541.7 537.6h10.5M1553.3 537.6h3.2M1590.0 537.6h18.9M1620.5 537.6h6.0M1538.6 541.6h14.7M1554.3 541.6h16.8M1542.8 547.6h13.7M1550.1 549.6h6.3M1557.5 549.6h6.3M1564.8 549.6h10.5M1579.5 549.6h6.3M1603.7 549.6h17.9M1547.0 551.6h14.7M1562.8 551.6h9.5M1547.0 559.6h9.5M1562.8 563.6h6.3M1597.4 565.6h5.2M1572.2 571.6h18.9M1542.8 575.6h8.4M1545.9 583.6h9.5M1547.0 587.6h2.1M1579.5 587.6h5.2" stroke="#dcdcaa" stroke-opacity=".43" stroke-width="1.25" fill="none"></path>
<path d="M1580.6 591.5h12.6M1598.4 591.5h5.2M1540.7 595.5h5.2M1531.2 597.5h5.2M1530.2 599.5h7.4M1544.9 601.5h6.3M1529.1 605.5h13.7M1547.0 605.5h23.1M1560.6 607.5h12.6M1574.3 607.5h6.3M1536.5 611.5h23.1M1580.6 611.5h23.1M1577.4 613.5h23.1M1608.9 613.5h17.6M1537.5 615.5h13.7M1555.4 615.5h13.7M1556.4 617.5h1.1M1560.6 617.5h13.7M1548.0 623.5h5.2M1576.4 623.5h23.1M1587.9 625.5h6.3M1595.3 625.5h3.2M1548.0 629.5h6.3M1542.8 631.5h4.2M1542.8 635.5h10.5M1556.4 635.5h23.1M1545.9 637.5h15.8M1552.2 639.5h16.8M1542.8 643.5h13.7M1559.6 643.5h26.2M1542.8 645.5h15.8M1561.7 645.5h28.4M1550.1 649.5h19.9M1554.3 653.5h28.4M1586.9 653.5h28.4M1555.4 655.5h27.3M1590.0 655.5h29.4M1551.2 659.5h27.3M1542.8 669.5h12.6M1558.5 669.5h2.1M1533.3 115.6h3.2M1537.5 115.6h4.2M1542.8 115.6h4.2M1548.0 115.6h1.1M1550.1 117.6h6.3M1557.5 117.6h5.2M1596.3 117.6h1.1M1550.1 119.6h11.6M1534.4 123.6h16.8M1557.5 127.6h13.7M1538.6 129.6h9.5M1557.5 131.6h2.1M1541.7 137.6h13.7M1556.4 137.6h6.3M1537.5 141.6h3.2M1534.4 147.6h6.3M1541.7 147.6h10.5M1534.4 149.6h4.2M1539.6 149.6h3.2M1543.8 153.6h2.1M1538.6 155.6h9.5M1560.6 155.6h7.4M1538.6 157.6h12.6M1526.0 179.6h16.8M1528.1 181.6h7.4M1545.9 181.6h18.9M1568.0 181.6h2.1M1544.9 183.6h10.5M1559.6 183.6h10.5M1521.8 187.6h5.2M1528.1 187.6h9.5M1538.6 187.6h4.2M1521.8 199.6h9.5M1532.3 199.6h18.9M1552.2 199.6h3.2M1521.8 203.6h18.9M1555.4 203.6h6.3M1535.4 205.6h3.2M1539.6 205.6h4.2M1544.9 205.6h4.2M1550.1 205.6h9.5M1530.2 207.6h5.2M1536.5 207.6h2.1M1533.3 209.6h11.6M1540.7 211.6h2.1M1545.9 215.6h9.5M1542.8 217.6h16.8M1560.6 217.6h3.2M1545.9 219.6h12.6M1538.6 221.6h2.1M1549.1 221.6h2.1M1577.4 223.6h13.7M1592.1 223.6h16.8M1620.5 223.6h4.2M1549.1 227.6h14.7M1547.0 229.6h11.6M1559.6 229.6h15.8M1545.9 231.6h18.9M1613.1 231.6h8.4M1622.6 231.6h3.9M1549.1 233.6h17.9M1568.0 233.6h17.9M1586.9 233.6h6.3M1594.2 233.6h3.2M1572.2 237.6h4.2M1577.4 237.6h3.2M1542.8 243.6h10.5M1554.3 243.6h13.7M1569.0 243.6h2.1M1581.6 243.6h15.8M1557.5 245.6h8.4M1577.4 245.6h16.8M1597.4 245.6h4.2M1602.6 245.6h8.4M1588.0 249.6h7.4M1549.1 253.6h6.3M1583.7 253.6h3.2M1587.9 253.6h6.3M1598.4 253.6h4.2M1542.8 259.6h9.5M1553.3 259.6h10.5M1534.4 263.6h15.8M1551.2 263.6h3.2M1570.1 263.6h11.6M1584.8 263.6h8.4M1594.2 263.6h11.6M1617.3 263.6h5.2M1544.9 267.6h18.9M1548.0 271.6h10.5M1559.6 271.6h4.2M1530.2 275.6h8.4M1529.1 281.6h10.5M1530.2 283.6h16.8M1548.0 283.6h3.2M1526.0 285.6h11.6M1547.0 293.6h12.6M1550.1 295.6h10.5M1561.7 295.6h8.4M1564.8 317.6h6.3M1529.1 319.6h17.9M1548.0 319.6h3.2M1526.0 321.6h7.4M1534.4 321.6h8.4M1533.3 325.6h5.2M1539.6 325.6h13.7M1554.3 325.6h2.1M1557.5 325.6h10.5M1534.4 327.6h13.7M1550.1 329.6h1.1M1537.5 333.6h8.4M1551.2 333.6h14.7M1570.1 333.6h9.5M1541.7 337.6h16.8M1563.8 337.6h8.4M1556.4 345.6h18.9M1576.4 345.6h5.2M1551.2 347.6h13.7M1571.1 347.6h14.7M1551.2 349.6h12.6M1549.1 351.6h3.2M1553.3 351.6h5.2M1557.5 365.6h3.2M1561.7 365.6h9.5M1586.9 365.6h18.9M1606.9 365.6h3.2M1547.0 369.6h15.8M1578.5 369.6h8.4M1547.0 371.6h15.8M1553.3 373.6h9.5M1563.8 373.6h4.2M1574.3 375.6h6.3M1547.0 377.6h7.4M1555.4 377.6h5.2M1561.7 377.6h6.3M1569.0 377.6h6.3M1553.3 381.6h14.7M1569.0 381.6h5.2M1554.3 389.6h13.7M1564.8 391.6h8.4M1586.9 391.6h8.4M1547.0 395.6h12.6M1545.9 401.6h3.2M1550.1 401.6h6.3M1560.6 401.6h10.5M1572.2 401.6h16.8M1565.9 403.6h8.4M1591.1 403.6h10.5M1547.0 405.6h8.4M1547.0 409.6h14.7M1562.8 409.6h9.5M1547.0 411.6h9.5M1575.3 411.6h5.2M1581.6 411.6h14.7M1611.0 411.6h7.4M1619.4 411.6h2.1M1581.7 413.6h5.2M1555.4 415.6h3.2M1559.6 415.6h15.8M1568.0 417.6h4.2M1561.7 421.6h6.3M1556.5 423.6h4.2M1561.7 423.6h10.5M1547.0 427.6h13.7M1561.7 427.6h2.1M1564.8 427.6h11.6M1547.0 433.6h14.7M1562.8 433.6h4.2M1564.8 439.6h16.8M1595.3 439.6h17.9M1559.6 441.6h17.9M1555.4 443.6h3.2M1559.6 443.6h16.8M1547.0 445.6h8.4M1542.8 453.6h7.4M1551.2 453.6h5.2M1572.2 453.6h10.5M1548.0 457.6h14.7M1563.8 457.6h12.6M1542.8 459.6h17.9M1561.7 459.6h2.1M1564.8 459.6h5.2M1554.3 463.6h9.5M1542.8 465.6h3.2M1547.0 465.6h4.2M1552.2 465.6h7.4M1542.8 469.6h14.7M1556.4 471.6h6.3M1563.8 471.6h4.2M1544.9 475.6h10.5M1603.7 477.6h2.1M1534.4 483.6h13.7M1549.1 483.6h18.9M1541.7 485.6h11.6M1539.6 487.6h17.9M1558.5 487.6h10.5M1545.9 489.6h16.8M1549.1 491.6h6.3M1542.8 493.6h7.4M1551.2 493.6h9.5M1611.0 493.6h2.1M1545.9 495.6h6.3M1571.1 495.6h7.4M1547.0 497.6h16.8M1574.3 497.6h2.1M1547.0 503.6h6.3M1554.3 503.6h6.3M1574.3 503.6h17.9M1556.5 507.6h3.2M1550.1 513.6h1.1M1541.7 519.6h6.3M1538.6 527.6h6.3M1555.4 527.6h4.2M1562.7 527.6h11.6M1542.8 531.6h6.3M1560.6 531.6h11.6M1538.6 533.6h16.8M1566.9 533.6h6.3M1574.3 533.6h9.5M1538.6 535.6h3.2M1542.8 535.6h9.5M1571.1 535.6h13.7M1585.8 535.6h2.1M1591.1 535.6h2.1M1594.2 535.6h7.4M1557.5 537.6h18.9M1577.4 537.6h3.2M1581.6 537.6h7.4M1610.0 537.6h6.3M1572.2 541.6h6.3M1542.8 545.6h12.6M1556.4 545.6h3.2M1557.5 547.6h2.1M1586.9 549.6h15.8M1564.8 555.6h11.6M1577.4 555.6h14.7M1557.5 559.6h15.8M1555.4 561.6h18.9M1575.3 561.6h7.4M1542.8 563.6h4.2M1548.0 563.6h13.7M1549.1 565.6h4.2M1556.4 565.6h12.6M1589.0 565.6h7.4M1550.1 571.6h2.1M1553.3 571.6h17.9M1542.8 573.6h18.9M1562.8 573.6h5.2M1537.5 583.6h3.2M1541.7 583.6h3.2M1556.4 583.6h7.4M1590.0 583.6h7.4M1534.4 587.6h11.6M1550.1 587.6h7.4M1558.5 587.6h2.1M1561.7 587.6h13.7M1616.3 587.6h6.3" stroke="#9cdcfe" stroke-opacity=".43" stroke-width="1.25" fill="none"></path>
<path d="M1526.0 605.5h2.1M1530.2 607.5h6.3M1526.0 611.5h2.1M1530.2 613.5h2.1M1534.4 615.5h2.1M1538.6 625.5h2.1M1542.8 637.5h2.1M1542.8 649.5h6.3M1547.0 651.5h4.2M1551.2 653.5h2.1M1551.2 661.5h6.3M1547.0 663.5h8.4M1551.2 665.5h6.3M1530.2 115.6h2.1M1534.4 127.6h2.1M1538.6 131.6h2.1M1541.7 131.6h14.7M1534.4 137.6h6.3M1534.4 141.6h2.1M1534.4 151.6h2.1M1538.6 153.6h4.2M1538.6 159.6h2.1M1534.4 169.6h2.1M1521.8 181.6h5.2M1521.8 183.6h2.1M1526.0 205.6h5.2M1578.5 205.6h9.5M1530.2 209.6h2.1M1534.4 211.6h5.2M1534.4 213.6h5.2M1565.9 213.6h12.6M1538.6 215.6h6.3M1538.6 219.6h6.3M1538.6 223.6h5.2M1538.6 229.6h2.1M1542.8 231.6h2.1M1542.8 233.6h5.2M1547.0 237.6h2.1M1542.8 247.6h2.1M1547.0 251.6h4.2M1542.8 253.6h5.2M1542.8 257.6h8.4M1530.2 267.6h2.1M1536.5 267.6h7.4M1530.2 271.6h16.8M1526.0 281.6h2.1M1526.0 287.6h6.3M1530.2 293.6h4.2M1535.5 293.6h10.5M1530.2 295.6h2.1M1521.8 307.6h5.2M1528.1 307.6h5.2M1521.8 317.6h2.1M1572.2 317.6h3.2M1521.8 319.6h6.3M1526.0 323.6h2.1M1530.2 325.6h2.1M1530.2 333.6h6.3M1534.4 335.6h2.1M1537.5 335.6h16.8M1538.6 337.6h2.1M1544.9 339.6h2.1M1534.4 345.6h2.1M1538.6 347.6h5.2M1542.8 351.6h5.2M1566.9 369.6h10.5M1547.0 373.6h5.2M1547.0 375.6h5.2M1547.0 381.6h5.2M1547.0 389.6h6.3M1542.8 401.6h2.1M1542.8 403.6h2.1M1547.0 417.6h2.1M1542.8 441.6h2.1M1547.0 449.6h2.1M1538.6 457.6h2.1M1538.6 475.6h5.2M1542.8 477.6h5.2M1580.6 485.6h2.1M1534.4 487.6h2.1M1538.6 489.6h6.3M1542.8 495.6h2.1M1542.8 513.6h6.3M1538.6 519.6h2.1M1538.6 529.6h2.1M1538.6 537.6h2.1M1538.6 543.6h2.1M1542.8 549.6h6.3M1622.6 549.6h3.9M1542.8 555.6h2.1M1570.1 565.6h15.8M1603.7 565.6h2.1M1542.8 571.6h6.3M1534.4 583.6h2.1" stroke="#c586c0" stroke-opacity=".43" stroke-width="1.25" fill="none"></path>
<path d="M1560.6 611.5h7.4M1604.7 611.5h5.2M1560.6 623.5h14.7M1600.5 623.5h17.9M1562.7 119.6h1.1M1549.1 129.6h9.5M1565.9 137.6h30.5M1573.2 147.6h1.1M1552.2 157.6h26.2M1537.5 169.6h5.2M1543.8 203.6h10.5M1540.7 213.6h24.2M1579.5 213.6h5.2M1571.1 231.6h23.1M1550.1 237.6h21.0M1611.0 243.6h14.7M1556.5 249.6h30.5M1552.2 251.6h3.2M1603.7 253.6h22.1M1550.2 273.6h13.7M1540.7 281.6h10.5M1534.4 307.6h8.4M1524.9 317.6h21.0M1538.6 339.6h5.2M1553.3 341.6h25.2M1553.3 353.6h13.7M1572.2 365.6h4.2M1563.8 371.6h8.4M1575.3 381.6h1.1M1555.4 393.6h36.8M1593.2 393.6h2.1M1575.3 403.6h14.7M1556.5 405.6h15.8M1547.0 415.6h7.4M1568.0 433.6h8.4M1578.5 441.6h17.9M1552.2 449.6h9.5M1564.8 465.6h3.2M1549.1 477.6h39.9M1570.1 487.6h2.1M1561.7 493.6h7.4M1570.1 493.6h21.0M1553.3 495.6h16.8M1564.8 497.6h5.2M1559.6 529.6h8.4M1582.7 529.6h17.9M1576.4 531.6h6.3M1556.4 533.6h6.3M1569.0 573.6h7.4M1564.8 583.6h24.2M1585.8 587.6h29.4" stroke="#ce9178" stroke-opacity=".43" stroke-width="1.25" fill="none"></path>
<path d="M1554.3 623.5h5.2M1541.7 143.6h5.2M1549.1 153.6h10.5M1556.4 253.6h5.2M1537.5 345.6h17.9M1550.1 417.6h16.8M1550.1 531.6h9.5M1541.7 543.6h8.4M1574.3 559.6h2.1M1570.1 563.6h2.1" stroke="#b5cea8" stroke-opacity=".43" stroke-width="1.25" fill="none"></path>
<path d="M1604.7 591.5h9.5M1538.6 621.5h28.4M1530.2 161.6h46.2M1530.2 163.6h58.8M1530.2 165.6h37.8M1521.8 189.6h57.8M1521.8 191.6h58.8M1521.8 193.6h38.9M1521.8 195.6h45.1M1521.8 301.6h27.3M1521.8 303.6h35.7M1521.8 305.6h18.9M1530.2 357.6h32.6M1530.2 359.6h41.0M1530.2 361.6h31.5M1530.2 383.6h28.4M1530.2 385.6h33.6M1530.2 387.6h35.7M1530.2 431.6h26.2M1530.2 461.6h32.6M1530.2 467.6h38.9M1530.2 499.6h64.0M1530.2 515.6h49.4" stroke="#6a9955" stroke-opacity=".43" stroke-width="1.25" fill="none"></path>
<path d="M1537.5 597.5h1.1M1543.8 605.5h2.1M1569.0 611.5h2.1M1542.8 613.5h2.1M1552.2 615.5h2.1M1558.5 617.5h1.1M1551.2 625.5h2.1M1548.0 631.5h1.1M1554.3 635.5h1.1M1557.5 643.5h1.1M1559.6 645.5h1.1M1583.7 653.5h2.1M1579.5 659.5h1.1M1556.4 669.5h1.1M1563.8 117.6h1.1M1575.3 117.6h1.1M1537.5 127.6h1.1M1572.2 127.6h1.1M1563.8 137.6h1.1M1547.0 153.6h1.1M1549.1 155.6h2.1M1543.8 181.6h1.1M1565.9 181.6h1.1M1556.4 183.6h2.1M1541.8 203.6h1.1M1532.3 205.6h2.1M1557.5 221.6h1.1M1564.8 223.6h1.1M1625.7 223.6h0.8M1565.9 231.6h1.1M1568.0 231.6h2.1M1595.3 245.6h1.1M1595.3 253.6h2.1M1582.7 263.6h1.1M1615.2 263.6h1.1M1533.3 267.6h2.1M1549.1 327.6h1.1M1551.2 327.6h1.1M1557.5 327.6h1.1M1567.0 333.6h2.1M1565.9 347.6h1.1M1568.0 347.6h2.1M1559.6 351.6h1.1M1563.8 369.6h2.1M1572.2 375.6h1.1M1600.5 391.6h2.1M1557.5 401.6h2.1M1608.9 411.6h1.1M1622.6 411.6h1.1M1624.7 411.6h1.1M1542.8 439.6h2.1M1593.2 439.6h1.1M1550.1 449.6h1.1M1545.9 457.6h1.1M1558.5 469.6h1.1M1590.0 477.6h2.1M1537.5 487.6h1.1M1571.1 497.6h2.1M1593.2 503.6h2.1M1560.6 527.6h1.1M1563.8 533.6h2.1M1589.0 535.6h1.1M1617.3 537.6h2.1M1576.4 549.6h2.1M1554.3 565.6h1.1M1586.9 565.6h1.1M1576.4 587.6h2.1" stroke="#d4d4d4" stroke-opacity=".43" stroke-width="1.25" fill="none"></path>
<path d="M1521.8 593.5h1.1M1571.1 605.5h1.1M1526.0 609.5h1.1M1611.0 611.5h1.1M1570.1 615.5h1.1M1599.5 625.5h1.1M1562.7 637.5h1.1M1542.8 641.5h1.1M1571.1 649.5h1.1M1616.3 653.5h1.1M1551.2 657.5h1.1M1542.8 667.5h1.1M1550.1 115.6h1.1M1574.3 127.6h1.1M1560.6 131.6h1.1M1538.6 133.6h1.1M1534.4 135.6h1.1M1545.9 151.6h1.1M1534.4 167.6h1.1M1530.2 171.6h1.1M1526.0 173.6h1.1M1521.8 175.6h1.1M1521.8 177.6h1.1M1521.8 185.6h1.1M1521.8 197.6h1.1M1589.0 205.6h1.1M1545.9 209.6h1.1M1585.8 213.6h1.1M1576.4 229.6h1.1M1598.4 233.6h1.1M1542.8 239.6h1.1M1547.0 247.6h1.1M1542.8 255.6h1.1M1534.4 261.6h1.1M1543.8 287.6h1.1M1526.0 297.6h1.1M1521.8 299.6h1.1M1543.8 307.6h1.1M1521.8 311.6h1.1M1521.8 315.6h1.1M1552.2 319.6h1.1M1534.4 323.6h1.1M1569.0 325.6h1.1M1530.2 331.6h1.1M1581.6 333.6h1.1M1564.8 335.6h1.1M1534.4 343.6h1.1M1582.7 345.6h1.1M1593.2 347.6h1.1M1561.7 351.6h1.1M1581.6 375.6h1.1M1577.4 389.6h1.1M1542.8 399.6h1.1M1602.6 403.6h1.1M1586.9 417.6h1.1M1542.8 435.6h1.1M1603.7 441.6h1.1M1562.7 449.6h1.1M1542.8 451.6h1.1M1538.6 455.6h1.1M1577.4 457.6h1.1M1538.6 473.6h1.1M1559.6 475.6h1.1M1538.6 479.6h1.1M1534.4 481.6h1.1M1573.2 487.6h1.1M1563.8 489.6h1.1M1579.5 495.6h1.1M1542.8 511.6h1.1M1538.6 517.6h1.1M1549.1 519.6h1.1M1538.6 521.6h1.1M1601.6 529.6h1.1M1551.2 543.6h1.1M1542.8 553.6h1.1M1594.2 555.6h1.1M1538.6 577.6h1.1M1534.4 579.6h1.1M1530.2 589.6h1.1" stroke="#da70d6" stroke-opacity=".43" stroke-width="1.25" fill="none"></path>
</svg>
<div class="a" style="left:1628px;top:595px;width:17px;height:25px;background:rgba(255,255,255,.035)"></div>
<div class="a" style="left:1640.5px;top:385.5px;width:4.5px;height:7px;background:#e02c20"></div>
<div class="a" style="left:1640.5px;top:394px;width:4.5px;height:7.5px;background:#e02c20"></div>
<div class="a" style="left:1634.2px;top:612px;width:6.5px;height:6px;background:#a26a1d"></div>
<div class="a" style="left:1634.2px;top:636.8px;width:6.5px;height:9.2px;background:#a26a1d"></div>
<div class="a" style="left:1629px;top:614px;width:16px;height:2px;background:#9c9c96"></div>
<div class="a" style="left:1628px;top:115px;width:17px;height:3px;background:linear-gradient(rgba(0,0,0,.4),rgba(0,0,0,0))"></div>
<div class="a" style="left:1627.5px;top:115px;width:1px;height:558px;background:rgba(0,0,0,.22)"></div>
<!-- RED ELLIPSE ANNOTATION -->
<svg style="left:0;top:0" width="1920" height="1020" viewBox="0 0 1920 1020"><path d="M508.9 547.3C508.9 544.3 511.8 540.7 513.7 538.3C515.7 535.9 518.3 534.4 520.6 532.8C522.9 531.2 524.1 530.4 527.5 528.7C530.9 527.0 536.6 524.5 541.2 522.8C545.8 521.1 550.3 519.7 554.9 518.4C559.5 517.1 561.7 516.6 568.6 515.0C575.5 513.4 587.0 510.6 596.1 508.8C605.2 507.0 614.4 505.6 623.5 504.4C632.6 503.1 639.9 502.4 651.0 501.3C662.1 500.2 668.9 499.7 690.0 498.0C711.1 496.3 748.3 492.8 777.5 491.0C806.7 489.2 835.8 488.2 865.0 487.5C894.2 486.8 923.3 486.8 952.5 486.7C981.7 486.6 1010.8 486.6 1040.0 487.2C1069.2 487.8 1098.3 488.6 1127.5 490.2C1156.7 491.8 1191.7 494.8 1215.0 496.9C1238.3 499.0 1254.2 501.0 1267.5 502.6C1280.8 504.2 1285.8 505.4 1294.9 506.8C1304.1 508.2 1313.2 509.7 1322.4 511.3C1331.6 512.9 1340.7 514.4 1349.8 516.4C1358.9 518.4 1369.3 520.9 1377.3 523.2C1385.3 525.5 1392.2 527.9 1397.9 530.1C1403.6 532.3 1407.9 534.2 1411.6 536.3C1415.2 538.4 1418.0 540.5 1419.8 542.5C1421.6 544.5 1422.6 546.1 1422.6 548.0C1422.6 549.9 1421.6 551.8 1419.8 554.1C1418.0 556.4 1415.2 559.2 1411.6 561.7C1407.9 564.2 1403.6 566.7 1397.9 569.2C1392.2 571.7 1385.3 574.3 1377.3 576.8C1369.3 579.3 1358.9 582.0 1349.8 584.0C1340.7 586.0 1331.6 587.6 1322.4 589.1C1313.2 590.6 1304.1 591.9 1294.9 593.2C1285.8 594.5 1276.7 595.7 1267.5 596.7C1258.3 597.7 1248.8 598.7 1240.0 599.4C1231.2 600.1 1233.8 600.0 1215.0 601.0C1196.2 602.0 1156.7 604.2 1127.5 605.7C1098.3 607.2 1069.2 608.8 1040.0 609.8C1010.8 610.8 981.7 611.5 952.5 611.5C923.3 611.5 894.2 610.8 865.0 610.0C835.8 609.2 806.7 608.4 777.5 606.8C748.3 605.2 711.1 602.2 690.0 600.4C668.9 598.5 662.1 597.1 651.0 595.7C639.9 594.3 632.6 593.3 623.5 591.9C614.4 590.5 605.2 588.9 596.1 587.1C587.0 585.3 575.5 582.6 568.6 580.9C561.7 579.2 559.5 578.4 554.9 577.0C550.3 575.6 545.8 574.5 541.2 572.7C536.6 571.0 530.9 568.2 527.5 566.5C524.1 564.8 522.9 564.1 520.6 562.4C518.3 560.7 515.7 558.7 513.7 556.2C511.8 553.7 508.9 550.3 508.9 547.3Z" fill="none" stroke="#f34c62" stroke-width="5.1" stroke-linejoin="round"></path></svg>
<!-- EDITOR GROUP 2: memory.bin hex editor -->
<div class="a" style="left:1646px;top:44px;width:274px;height:43px;background:#181818;border-bottom:1px solid #2b2b2b"></div>
<div class="a" style="left:1646px;top:44px;width:159px;height:43px;background:#1f1f1f;border-right:1px solid #2b2b2b"></div>
<svg style="left:1666.5px;top:59px" width="12" height="13" viewBox="0 0 12 13"><path d="M0 1h11M0 4.6h7.5M0 8.2h11M0 11.8h7.5" stroke="#c5c5c5" stroke-width="1.5" fill="none"></path></svg>
<span class="t" style="left: 1685px; top: 52px; color: rgb(166, 166, 166); font-style: italic; letter-spacing: -0.019px;">memory.bin</span>
<svg style="left:1781px;top:60px" width="12" height="12" viewBox="0 0 12 12"><path d="M.7.7l10.6 10.6M11.3.7L.7 11.3" stroke="#8a8a8a" stroke-width="1.3" fill="none"></path></svg>
<div class="a" style="left:1883.5px;top:64.5px;width:3px;height:3px;border-radius:2px;background:#ccc"></div>
<div class="a" style="left:1890px;top:64.5px;width:3px;height:3px;border-radius:2px;background:#ccc"></div>
<div class="a" style="left:1896.5px;top:64.5px;width:3px;height:3px;border-radius:2px;background:#ccc"></div>
<span class="t" style="left: 1665px; top: 87.8px; color: rgb(169, 169, 169); letter-spacing: -0.072px;">0x00007ffff7a04419</span>
<svg style="left:1812.5px;top:94.3px" width="9" height="14" viewBox="0 0 9 14"><path d="M1.3 1l6 6-6 6" fill="none" stroke="#a9a9a9" stroke-width="1.3"></path></svg>
<svg style="left:1835px;top:95.3px" width="12" height="13" viewBox="0 0 12 13"><path d="M0 1h11M0 4.6h7.5M0 8.2h11M0 11.8h7.5" stroke="#c5c5c5" stroke-width="1.5" fill="none"></path></svg>
<span class="t" style="left: 1854.5px; top: 87.8px; color: rgb(169, 169, 169); letter-spacing: 0.031px;">memory.bin</span>
<svg style="left:1652.5px;top:119px" width="20" height="20" viewBox="0 0 20 20"><path d="M8.67 3.84 L8.86 1.48 L11.14 1.48 L11.33 3.84 L13.42 4.71 L15.22 3.16 L16.84 4.78 L15.29 6.58 L16.16 8.67 L18.52 8.86 L18.52 11.14 L16.16 11.33 L15.29 13.42 L16.84 15.22 L15.22 16.84 L13.42 15.29 L11.33 16.16 L11.14 18.52 L8.86 18.52 L8.67 16.16 L6.58 15.29 L4.78 16.84 L3.16 15.22 L4.71 13.42 L3.84 11.33 L1.48 11.14 L1.48 8.86 L3.84 8.67 L4.71 6.58 L3.16 4.78 L4.78 3.16 L6.58 4.71Z" fill="none" stroke="#ccc" stroke-width="1.4" stroke-linejoin="round"></path><circle cx="10" cy="10" r="2.3" fill="none" stroke="#ccc" stroke-width="1.4"></circle></svg>
<div class="a" style="left:1743px;top:143px;width:177px;height:110px;background:#264f78"></div>
<span class="t m" style="left:1746.8px;top:116.00px;font-size:16.6px;letter-spacing:-0.335px;font-weight:bold;color:#e4e4e4">00</span>
<span class="t m" style="left:1774.3px;top:116.00px;font-size:16.6px;letter-spacing:-0.335px;font-weight:bold;color:#e4e4e4">01</span>
<span class="t m" style="left:1801.8px;top:116.00px;font-size:16.6px;letter-spacing:-0.335px;font-weight:bold;color:#e4e4e4">02</span>
<span class="t m" style="left:1829.3px;top:116.00px;font-size:16.6px;letter-spacing:-0.335px;font-weight:bold;color:#e4e4e4">03</span>
<span class="t m" style="left:1856.8px;top:116.00px;font-size:16.6px;letter-spacing:-0.335px;font-weight:bold;color:#e4e4e4">04</span>
<span class="t m" style="left:1884.3px;top:116.00px;font-size:16.6px;letter-spacing:-0.335px;font-weight:bold;color:#e4e4e4">05</span>
<span class="t m" style="left:1911.8px;top:116.00px;font-size:16.6px;letter-spacing:-0.335px;font-weight:bold;color:#e4e4e4">06</span>
<span class="t m" style="left:1652.3px;top:143.60px;font-size:16.6px;letter-spacing:-0.335px;color:#6e7681">00000000</span>
<span class="t m" style="left:1746.8px;top:143.60px;font-size:16.6px;letter-spacing:-0.335px;color:#d4d4d4">72</span>
<span class="t m" style="left:1774.3px;top:143.60px;font-size:16.6px;letter-spacing:-0.335px;color:#d4d4d4">65</span>
<span class="t m" style="left:1801.8px;top:143.60px;font-size:16.6px;letter-spacing:-0.335px;color:#d4d4d4">61</span>
<span class="t m" style="left:1829.3px;top:143.60px;font-size:16.6px;letter-spacing:-0.335px;color:#d4d4d4">64</span>
<span class="t m" style="left:1856.8px;top:143.60px;font-size:16.6px;letter-spacing:-0.335px;color:#d4d4d4">66</span>
<span class="t m" style="left:1884.3px;top:143.60px;font-size:16.6px;letter-spacing:-0.335px;color:#d4d4d4">6C</span>
<span class="t m" style="left:1911.8px;top:143.60px;font-size:16.6px;letter-spacing:-0.335px;color:#d4d4d4">61</span>
<span class="t m" style="left:1652.3px;top:171.10px;font-size:16.6px;letter-spacing:-0.335px;color:#6e7681">00000010</span>
<span class="t m" style="left:1746.8px;top:171.10px;font-size:16.6px;letter-spacing:-0.335px;color:#d4d4d4">75</span>
<span class="t m" style="left:1774.3px;top:171.10px;font-size:16.6px;letter-spacing:-0.335px;color:#d4d4d4">79</span>
<span class="t m" style="left:1801.8px;top:171.10px;font-size:16.6px;letter-spacing:-0.335px;color:#d4d4d4">6F</span>
<span class="t m" style="left:1829.3px;top:171.10px;font-size:16.6px;letter-spacing:-0.335px;color:#d4d4d4">75</span>
<span class="t m" style="left:1856.8px;top:171.10px;font-size:16.6px;letter-spacing:-0.335px;color:#d4d4d4">2F</span>
<span class="t m" style="left:1884.3px;top:171.10px;font-size:16.6px;letter-spacing:-0.335px;color:#d4d4d4">7A</span>
<span class="t m" style="left:1911.8px;top:171.10px;font-size:16.6px;letter-spacing:-0.335px;color:#d4d4d4">65</span>
<span class="t m" style="left:1652.3px;top:198.60px;font-size:16.6px;letter-spacing:-0.335px;color:#6e7681">00000020</span>
<span class="t m" style="left:1746.8px;top:198.60px;font-size:16.6px;letter-spacing:-0.335px;color:#d4d4d4">64</span>
<span class="t m" style="left:1774.3px;top:198.60px;font-size:16.6px;letter-spacing:-0.335px;color:#d4d4d4">65</span>
<span class="t m" style="left:1801.8px;top:198.60px;font-size:16.6px;letter-spacing:-0.335px;color:#d4d4d4">78</span>
<span class="t m" style="left:1829.3px;top:198.60px;font-size:16.6px;letter-spacing:-0.335px;color:#d4d4d4">2E</span>
<span class="t m" style="left:1856.8px;top:198.60px;font-size:16.6px;letter-spacing:-0.335px;color:#d4d4d4">70</span>
<span class="t m" style="left:1884.3px;top:198.60px;font-size:16.6px;letter-spacing:-0.335px;color:#d4d4d4">68</span>
<span class="t m" style="left:1911.8px;top:198.60px;font-size:16.6px;letter-spacing:-0.335px;color:#d4d4d4">70</span>
<span class="t m" style="left:1652.3px;top:226.10px;font-size:16.6px;letter-spacing:-0.335px;color:#6e7681">00000030</span>
<span class="t m" style="left:1746.8px;top:226.10px;font-size:16.6px;letter-spacing:-0.335px;color:#d4d4d4">6C</span>
<span class="t m" style="left:1774.3px;top:226.10px;font-size:16.6px;letter-spacing:-0.335px;color:#d4d4d4">28</span>
<span class="t m" style="left:1801.8px;top:226.10px;font-size:16.6px;letter-spacing:-0.335px;color:#d4d4d4">29</span>
<span class="t m" style="left:1829.3px;top:226.10px;font-size:16.6px;letter-spacing:-0.335px;color:#d4d4d4">27</span>
<span class="t m" style="left:1856.8px;top:226.10px;font-size:16.6px;letter-spacing:-0.335px;color:#d4d4d4">64</span>
<span class="t m" style="left:1884.3px;top:226.10px;font-size:16.6px;letter-spacing:-0.335px;color:#d4d4d4">20</span>
<span class="t m" style="left:1911.8px;top:226.10px;font-size:16.6px;letter-spacing:-0.335px;color:#d4d4d4">63</span>
<span class="t m" style="left:1652.3px;top:253.60px;font-size:16.6px;letter-spacing:-0.335px;color:#6e7681">00000040</span>
<span class="t m" style="left:1746.8px;top:253.60px;font-size:16.6px;letter-spacing:-0.335px;color:#d4d4d4">00</span>
<span class="t m" style="left:1774.3px;top:253.60px;font-size:16.6px;letter-spacing:-0.335px;color:#d4d4d4">00</span>
<span class="t m" style="left:1801.8px;top:253.60px;font-size:16.6px;letter-spacing:-0.335px;color:#d4d4d4">00</span>
<span class="t m" style="left:1829.3px;top:253.60px;font-size:16.6px;letter-spacing:-0.335px;color:#d4d4d4">00</span>
<span class="t m" style="left:1856.8px;top:253.60px;font-size:16.6px;letter-spacing:-0.335px;color:#d4d4d4">00</span>
<span class="t m" style="left:1884.3px;top:253.60px;font-size:16.6px;letter-spacing:-0.335px;color:#d4d4d4">00</span>
<span class="t m" style="left:1911.8px;top:253.60px;font-size:16.6px;letter-spacing:-0.335px;color:#d4d4d4">00</span>
<span class="t m" style="left:1652.3px;top:281.10px;font-size:16.6px;letter-spacing:-0.335px;color:#6e7681">00000050</span>
<span class="t m" style="left:1746.8px;top:281.10px;font-size:16.6px;letter-spacing:-0.335px;color:#d4d4d4">00</span>
<span class="t m" style="left:1774.3px;top:281.10px;font-size:16.6px;letter-spacing:-0.335px;color:#d4d4d4">00</span>
<span class="t m" style="left:1801.8px;top:281.10px;font-size:16.6px;letter-spacing:-0.335px;color:#d4d4d4">00</span>
<span class="t m" style="left:1829.3px;top:281.10px;font-size:16.6px;letter-spacing:-0.335px;color:#d4d4d4">00</span>
<span class="t m" style="left:1856.8px;top:281.10px;font-size:16.6px;letter-spacing:-0.335px;color:#d4d4d4">00</span>
<span class="t m" style="left:1884.3px;top:281.10px;font-size:16.6px;letter-spacing:-0.335px;color:#d4d4d4">00</span>
<span class="t m" style="left:1911.8px;top:281.10px;font-size:16.6px;letter-spacing:-0.335px;color:#d4d4d4">00</span>
<span class="t m" style="left:1652.3px;top:308.60px;font-size:16.6px;letter-spacing:-0.335px;color:#6e7681">00000060</span>
<span class="t m" style="left:1746.8px;top:308.60px;font-size:16.6px;letter-spacing:-0.335px;color:#d4d4d4">00</span>
<span class="t m" style="left:1774.3px;top:308.60px;font-size:16.6px;letter-spacing:-0.335px;color:#d4d4d4">00</span>
<span class="t m" style="left:1801.8px;top:308.60px;font-size:16.6px;letter-spacing:-0.335px;color:#d4d4d4">00</span>
<span class="t m" style="left:1829.3px;top:308.60px;font-size:16.6px;letter-spacing:-0.335px;color:#d4d4d4">00</span>
<span class="t m" style="left:1856.8px;top:308.60px;font-size:16.6px;letter-spacing:-0.335px;color:#d4d4d4">00</span>
<span class="t m" style="left:1884.3px;top:308.60px;font-size:16.6px;letter-spacing:-0.335px;color:#d4d4d4">00</span>
<span class="t m" style="left:1911.8px;top:308.60px;font-size:16.6px;letter-spacing:-0.335px;color:#d4d4d4">00</span>
<span class="t m" style="left:1652.3px;top:336.10px;font-size:16.6px;letter-spacing:-0.335px;color:#6e7681">00000070</span>
<span class="t m" style="left:1746.8px;top:336.10px;font-size:16.6px;letter-spacing:-0.335px;color:#d4d4d4">00</span>
<span class="t m" style="left:1774.3px;top:336.10px;font-size:16.6px;letter-spacing:-0.335px;color:#d4d4d4">00</span>
<span class="t m" style="left:1801.8px;top:336.10px;font-size:16.6px;letter-spacing:-0.335px;color:#d4d4d4">00</span>
<span class="t m" style="left:1829.3px;top:336.10px;font-size:16.6px;letter-spacing:-0.335px;color:#d4d4d4">00</span>
<span class="t m" style="left:1856.8px;top:336.10px;font-size:16.6px;letter-spacing:-0.335px;color:#d4d4d4">00</span>
<span class="t m" style="left:1884.3px;top:336.10px;font-size:16.6px;letter-spacing:-0.335px;color:#d4d4d4">00</span>
<span class="t m" style="left:1911.8px;top:336.10px;font-size:16.6px;letter-spacing:-0.335px;color:#d4d4d4">00</span>
<span class="t m" style="left:1652.3px;top:363.60px;font-size:16.6px;letter-spacing:-0.335px;color:#6e7681">00000080</span>
<span class="t m" style="left:1746.8px;top:363.60px;font-size:16.6px;letter-spacing:-0.335px;color:#d4d4d4">00</span>
<span class="t m" style="left:1774.3px;top:363.60px;font-size:16.6px;letter-spacing:-0.335px;color:#d4d4d4">00</span>
<span class="t m" style="left:1801.8px;top:363.60px;font-size:16.6px;letter-spacing:-0.335px;color:#d4d4d4">00</span>
<span class="t m" style="left:1829.3px;top:363.60px;font-size:16.6px;letter-spacing:-0.335px;color:#d4d4d4">00</span>
<span class="t m" style="left:1856.8px;top:363.60px;font-size:16.6px;letter-spacing:-0.335px;color:#d4d4d4">00</span>
<span class="t m" style="left:1884.3px;top:363.60px;font-size:16.6px;letter-spacing:-0.335px;color:#d4d4d4">00</span>
<span class="t m" style="left:1911.8px;top:363.60px;font-size:16.6px;letter-spacing:-0.335px;color:#d4d4d4">00</span>
<span class="t m" style="left:1652.3px;top:391.10px;font-size:16.6px;letter-spacing:-0.335px;color:#6e7681">00000090</span>
<span class="t m" style="left:1746.8px;top:391.10px;font-size:16.6px;letter-spacing:-0.335px;color:#d4d4d4">00</span>
<span class="t m" style="left:1774.3px;top:391.10px;font-size:16.6px;letter-spacing:-0.335px;color:#d4d4d4">00</span>
<span class="t m" style="left:1801.8px;top:391.10px;font-size:16.6px;letter-spacing:-0.335px;color:#d4d4d4">00</span>
<span class="t m" style="left:1829.3px;top:391.10px;font-size:16.6px;letter-spacing:-0.335px;color:#d4d4d4">00</span>
<span class="t m" style="left:1856.8px;top:391.10px;font-size:16.6px;letter-spacing:-0.335px;color:#d4d4d4">00</span>
<span class="t m" style="left:1884.3px;top:391.10px;font-size:16.6px;letter-spacing:-0.335px;color:#d4d4d4">00</span>
<span class="t m" style="left:1911.8px;top:391.10px;font-size:16.6px;letter-spacing:-0.335px;color:#d4d4d4">00</span>
<span class="t m" style="left:1652.3px;top:418.60px;font-size:16.6px;letter-spacing:-0.335px;color:#6e7681">000000A0</span>
<span class="t m" style="left:1746.8px;top:418.60px;font-size:16.6px;letter-spacing:-0.335px;color:#d4d4d4">00</span>
<span class="t m" style="left:1774.3px;top:418.60px;font-size:16.6px;letter-spacing:-0.335px;color:#d4d4d4">00</span>
<span class="t m" style="left:1801.8px;top:418.60px;font-size:16.6px;letter-spacing:-0.335px;color:#d4d4d4">00</span>
<span class="t m" style="left:1829.3px;top:418.60px;font-size:16.6px;letter-spacing:-0.335px;color:#d4d4d4">00</span>
<span class="t m" style="left:1856.8px;top:418.60px;font-size:16.6px;letter-spacing:-0.335px;color:#d4d4d4">00</span>
<span class="t m" style="left:1884.3px;top:418.60px;font-size:16.6px;letter-spacing:-0.335px;color:#d4d4d4">00</span>
<span class="t m" style="left:1911.8px;top:418.60px;font-size:16.6px;letter-spacing:-0.335px;color:#d4d4d4">00</span>
<span class="t m" style="left:1652.3px;top:446.10px;font-size:16.6px;letter-spacing:-0.335px;color:#6e7681">000000B0</span>
<span class="t m" style="left:1746.8px;top:446.10px;font-size:16.6px;letter-spacing:-0.335px;color:#d4d4d4">00</span>
<span class="t m" style="left:1774.3px;top:446.10px;font-size:16.6px;letter-spacing:-0.335px;color:#d4d4d4">00</span>
<span class="t m" style="left:1801.8px;top:446.10px;font-size:16.6px;letter-spacing:-0.335px;color:#d4d4d4">00</span>
<span class="t m" style="left:1829.3px;top:446.10px;font-size:16.6px;letter-spacing:-0.335px;color:#d4d4d4">00</span>
<span class="t m" style="left:1856.8px;top:446.10px;font-size:16.6px;letter-spacing:-0.335px;color:#d4d4d4">00</span>
<span class="t m" style="left:1884.3px;top:446.10px;font-size:16.6px;letter-spacing:-0.335px;color:#d4d4d4">00</span>
<span class="t m" style="left:1911.8px;top:446.10px;font-size:16.6px;letter-spacing:-0.335px;color:#d4d4d4">00</span>
<span class="t m" style="left:1652.3px;top:473.60px;font-size:16.6px;letter-spacing:-0.335px;color:#6e7681">000000C0</span>
<span class="t m" style="left:1746.8px;top:473.60px;font-size:16.6px;letter-spacing:-0.335px;color:#d4d4d4">00</span>
<span class="t m" style="left:1774.3px;top:473.60px;font-size:16.6px;letter-spacing:-0.335px;color:#d4d4d4">00</span>
<span class="t m" style="left:1801.8px;top:473.60px;font-size:16.6px;letter-spacing:-0.335px;color:#d4d4d4">00</span>
<span class="t m" style="left:1829.3px;top:473.60px;font-size:16.6px;letter-spacing:-0.335px;color:#d4d4d4">00</span>
<span class="t m" style="left:1856.8px;top:473.60px;font-size:16.6px;letter-spacing:-0.335px;color:#d4d4d4">00</span>
<span class="t m" style="left:1884.3px;top:473.60px;font-size:16.6px;letter-spacing:-0.335px;color:#d4d4d4">00</span>
<span class="t m" style="left:1911.8px;top:473.60px;font-size:16.6px;letter-spacing:-0.335px;color:#d4d4d4">00</span>
<span class="t m" style="left:1652.3px;top:501.10px;font-size:16.6px;letter-spacing:-0.335px;color:#6e7681">000000D0</span>
<span class="t m" style="left:1746.8px;top:501.10px;font-size:16.6px;letter-spacing:-0.335px;color:#d4d4d4">F2</span>
<span class="t m" style="left:1774.3px;top:501.10px;font-size:16.6px;letter-spacing:-0.335px;color:#d4d4d4">E8</span>
<span class="t m" style="left:1801.8px;top:501.10px;font-size:16.6px;letter-spacing:-0.335px;color:#d4d4d4">55</span>
<span class="t m" style="left:1829.3px;top:501.10px;font-size:16.6px;letter-spacing:-0.335px;color:#d4d4d4">55</span>
<span class="t m" style="left:1856.8px;top:501.10px;font-size:16.6px;letter-spacing:-0.335px;color:#d4d4d4">55</span>
<span class="t m" style="left:1884.3px;top:501.10px;font-size:16.6px;letter-spacing:-0.335px;color:#d4d4d4">00</span>
<span class="t m" style="left:1911.8px;top:501.10px;font-size:16.6px;letter-spacing:-0.335px;color:#d4d4d4">00</span>
<span class="t m" style="left:1652.3px;top:528.60px;font-size:16.6px;letter-spacing:-0.335px;color:#6e7681">000000E0</span>
<span class="t m" style="left:1746.8px;top:528.60px;font-size:16.6px;letter-spacing:-0.335px;color:#d4d4d4">00</span>
<span class="t m" style="left:1774.3px;top:528.60px;font-size:16.6px;letter-spacing:-0.335px;color:#d4d4d4">00</span>
<span class="t m" style="left:1801.8px;top:528.60px;font-size:16.6px;letter-spacing:-0.335px;color:#d4d4d4">00</span>
<span class="t m" style="left:1829.3px;top:528.60px;font-size:16.6px;letter-spacing:-0.335px;color:#d4d4d4">00</span>
<span class="t m" style="left:1856.8px;top:528.60px;font-size:16.6px;letter-spacing:-0.335px;color:#d4d4d4">00</span>
<span class="t m" style="left:1884.3px;top:528.60px;font-size:16.6px;letter-spacing:-0.335px;color:#d4d4d4">00</span>
<span class="t m" style="left:1911.8px;top:528.60px;font-size:16.6px;letter-spacing:-0.335px;color:#d4d4d4">00</span>
<span class="t m" style="left:1652.3px;top:556.10px;font-size:16.6px;letter-spacing:-0.335px;color:#6e7681">000000F0</span>
<span class="t m" style="left:1746.8px;top:556.10px;font-size:16.6px;letter-spacing:-0.335px;color:#d4d4d4">00</span>
<span class="t m" style="left:1774.3px;top:556.10px;font-size:16.6px;letter-spacing:-0.335px;color:#d4d4d4">00</span>
<span class="t m" style="left:1801.8px;top:556.10px;font-size:16.6px;letter-spacing:-0.335px;color:#d4d4d4">00</span>
<span class="t m" style="left:1829.3px;top:556.10px;font-size:16.6px;letter-spacing:-0.335px;color:#d4d4d4">00</span>
<span class="t m" style="left:1856.8px;top:556.10px;font-size:16.6px;letter-spacing:-0.335px;color:#d4d4d4">00</span>
<span class="t m" style="left:1884.3px;top:556.10px;font-size:16.6px;letter-spacing:-0.335px;color:#d4d4d4">00</span>
<span class="t m" style="left:1911.8px;top:556.10px;font-size:16.6px;letter-spacing:-0.335px;color:#d4d4d4">00</span>
<span class="t m" style="left:1652.3px;top:583.60px;font-size:16.6px;letter-spacing:-0.335px;color:#6e7681">00000100</span>
<span class="t m" style="left:1746.8px;top:583.60px;font-size:16.6px;letter-spacing:-0.335px;color:#d4d4d4">00</span>
<span class="t m" style="left:1774.3px;top:583.60px;font-size:16.6px;letter-spacing:-0.335px;color:#d4d4d4">00</span>
<span class="t m" style="left:1801.8px;top:583.60px;font-size:16.6px;letter-spacing:-0.335px;color:#d4d4d4">00</span>
<span class="t m" style="left:1829.3px;top:583.60px;font-size:16.6px;letter-spacing:-0.335px;color:#d4d4d4">00</span>
<span class="t m" style="left:1856.8px;top:583.60px;font-size:16.6px;letter-spacing:-0.335px;color:#d4d4d4">00</span>
<span class="t m" style="left:1884.3px;top:583.60px;font-size:16.6px;letter-spacing:-0.335px;color:#d4d4d4">00</span>
<span class="t m" style="left:1911.8px;top:583.60px;font-size:16.6px;letter-spacing:-0.335px;color:#d4d4d4">00</span>
<span class="t m" style="left:1652.3px;top:611.10px;font-size:16.6px;letter-spacing:-0.335px;color:#6e7681">00000110</span>
<span class="t m" style="left:1746.8px;top:611.10px;font-size:16.6px;letter-spacing:-0.335px;color:#d4d4d4">00</span>
<span class="t m" style="left:1774.3px;top:611.10px;font-size:16.6px;letter-spacing:-0.335px;color:#d4d4d4">00</span>
<span class="t m" style="left:1801.8px;top:611.10px;font-size:16.6px;letter-spacing:-0.335px;color:#d4d4d4">00</span>
<span class="t m" style="left:1829.3px;top:611.10px;font-size:16.6px;letter-spacing:-0.335px;color:#d4d4d4">00</span>
<span class="t m" style="left:1856.8px;top:611.10px;font-size:16.6px;letter-spacing:-0.335px;color:#d4d4d4">00</span>
<span class="t m" style="left:1884.3px;top:611.10px;font-size:16.6px;letter-spacing:-0.335px;color:#d4d4d4">00</span>
<span class="t m" style="left:1911.8px;top:611.10px;font-size:16.6px;letter-spacing:-0.335px;color:#d4d4d4">00</span>
<span class="t m" style="left:1652.3px;top:638.60px;font-size:16.6px;letter-spacing:-0.335px;color:#6e7681">00000120</span>
<span class="t m" style="left:1746.8px;top:638.60px;font-size:16.6px;letter-spacing:-0.335px;color:#d4d4d4">00</span>
<span class="t m" style="left:1774.3px;top:638.60px;font-size:16.6px;letter-spacing:-0.335px;color:#d4d4d4">00</span>
<span class="t m" style="left:1801.8px;top:638.60px;font-size:16.6px;letter-spacing:-0.335px;color:#d4d4d4">00</span>
<span class="t m" style="left:1829.3px;top:638.60px;font-size:16.6px;letter-spacing:-0.335px;color:#d4d4d4">00</span>
<span class="t m" style="left:1856.8px;top:638.60px;font-size:16.6px;letter-spacing:-0.335px;color:#d4d4d4">00</span>
<span class="t m" style="left:1884.3px;top:638.60px;font-size:16.6px;letter-spacing:-0.335px;color:#d4d4d4">00</span>
<span class="t m" style="left:1911.8px;top:638.60px;font-size:16.6px;letter-spacing:-0.335px;color:#d4d4d4">00</span>
<div class="a" style="left:1901px;top:143px;width:19px;height:209px;background:rgba(121,121,121,.4)"></div>
<!-- PANEL -->
<div class="a" style="left:423px;top:673px;width:1497px;height:320px;background:#181818;border-top:1px solid #2b2b2b"></div>
<span class="t" style="left: 448px; top: 682.5px; font-size: 13.75px; color: rgb(157, 157, 157); letter-spacing: -1.24px;">PROBLEMS</span>
<div class="a" style="left:520px;top:685px;width:20px;height:20px;border-radius:10px;background:#0078d4"></div>
<span class="t" style="left:520px;top:682px;width:20px;text-align:center;font-size:13.75px;color:#fff">3</span>
<span class="t" style="left: 567.5px; top: 682.5px; font-size: 13.75px; color: rgb(157, 157, 157); letter-spacing: -0.922px;">OUTPUT</span>
<span class="t" style="left: 649px; top: 682.5px; font-size: 13.75px; color: rgb(157, 157, 157); letter-spacing: -1.036px;">DEBUG CONSOLE</span>
<span class="t" style="left: 785.5px; top: 682.5px; font-size: 13.75px; color: rgb(231, 231, 231); letter-spacing: -0.629px;">TERMINAL</span>
<div class="a" style="left:783px;top:707.5px;width:69px;height:1.5px;background:#0078d4"></div>
<span class="t" style="left: 880px; top: 682.5px; font-size: 13.75px; color: rgb(157, 157, 157); letter-spacing: -1.525px;">PORTS</span>
<svg style="left:1753.5px;top:687.5px" width="17" height="17" viewBox="0 0 17 17"><rect x=".7" y=".7" width="15.3" height="15.3" rx="2" fill="none" stroke="#ccc" stroke-width="1.4"></rect><path d="M8.35.7v15.3" stroke="#ccc" stroke-width="1.4"></path></svg>
<svg style="left:1776.5px;top:692px" width="11" height="7" viewBox="0 0 11 7"><path d="M.7.7l4.3 4.3L9.3.7" fill="none" stroke="#ccc" stroke-width="1.3"></path></svg>
<div class="a" style="left:1801.8px;top:694px;width:3px;height:3px;border-radius:2px;background:#ccc"></div>
<div class="a" style="left:1808.5px;top:694px;width:3px;height:3px;border-radius:2px;background:#ccc"></div>
<div class="a" style="left:1815.2px;top:694px;width:3px;height:3px;border-radius:2px;background:#ccc"></div>
<div class="a" style="left:1834px;top:685px;width:1px;height:20px;background:#5a5a5a"></div>
<svg style="left:1851px;top:687.5px" width="17" height="15" viewBox="0 0 17 15"><path d="M.7 5V2.2A1.5 1.5 0 0 1 2.2.7H5.500M11 .7h3.300a1.500 1.500 0 0 1 1.500 1.500V5M15.800 10v2.800a1.500 1.500 0 0 1-1.500 1.500H11M5.500 14.300H2.200A1.500 1.500 0 0 1 .7 12.800V10" fill="none" stroke="#ccc" stroke-width="1.400"></path></svg>
<svg style="left:1885.5px;top:689.500px" width="12" height="12" viewBox="0 0 12 12"><path d="M.7.7l10.300 10.300M11 .7L.7 11" stroke="#ccc" stroke-width="1.400" fill="none"></path></svg>
<div class="a" style="left:1770px;top:716px;width:1px;height:277px;background:#2b2b2b"></div>
<div class="a" style="left:1753px;top:729px;width:17px;height:264px;background:#1c1c1c;border-left:1px dotted #222"></div>
<div class="a" style="left:1771px;top:744px;width:149px;height:27.500px;background:#37373d;border-left:1px solid #0078d4"></div>
<svg style="left:1784.500px;top:720px" width="19" height="21" viewBox="0 0 19 21"><path d="M9.300 1L17.500 5.500v9.500L9.300 19.800 1 15V5.500z" fill="none" stroke="#ccc" stroke-width="1.300" stroke-linejoin="round"></path><path d="M17.300 5.800L9.800 10.200V19.500L17.300 15z" fill="#ccc"></path><text x="11.300" y="15.500" font-family="Liberation Sans" font-size="5.500" fill="#181818" font-weight="bold">$</text></svg>
<span class="t" style="left: 1808.5px; top: 716.5px; color: rgb(204, 204, 204); letter-spacing: -0.438px;">bash</span>
<span class="t" style="left: 1849.5px; top: 717px; color: rgb(157, 157, 157); font-size: 14.6px; letter-spacing: 0.19px;">php-src</span>
<svg style="left:1783.500px;top:747px" width="20" height="21" viewBox="0 0 20 21"><ellipse cx="10" cy="12" rx="6" ry="7.300" fill="none" stroke="#ccc" stroke-width="1.300"></ellipse><path d="M6.600 6.300a3.500 3.500 0 0 1 6.800 0M4.400 12H.5M15.600 12h3.900M5 8L1.800 5.300M15 8l3.200-2.700M5.300 16.500L2 19.500M14.700 16.500l3.300 3M7.200 9.300l5.600 5.600M12.800 9.300l-5.600 5.600" fill="none" stroke="#ccc" stroke-width="1.300"></path></svg>
<span class="t" style="left: 1808.5px; top: 744px; color: rgb(204, 204, 204); letter-spacing: 0.139px;">cppdbg: php</span>
<div class="a m" style="left:448px;top:731.6px;font-size:16.6px;letter-spacing:-0.96px;line-height:22px;color:#ccc;white-space:pre">tring in /home/youyou/zend/ctf/index.php(1) : eval()'d code:1
Stack trace:
#0 /home/youyou/zend/ctf/index.php(1) : eval()'d code(1): test-&gt;__destruct()
#1 /home/youyou/zend/ctf/index.php(1): eval()
#2 {main}
  thrown in /home/youyou/zend/ctf/index.php(1) : eval()'d code on line 1
[Sun Oct 19 14:25:33 2025] 127.0.0.1:37548 Closing
[Sun Oct 19 14:28:22 2025] 127.0.0.1:47712 Accepted
[Sun Oct 19 14:28:27 2025] 127.0.0.1:47712 [200]: GET /?land=O:4:%22test%22:3:{s:8:%22readflag%22;i:1;s:1:%22f%22;s:63:%22%00readflag/home/youyou
/zend/ctf/index.php(1)%20:%20eval()%27d%20code:1$7%22;s:3:%22key%22;s:4:%22func%22;}
[Sun Oct 19 14:28:27 2025] 127.0.0.1:47712 Closing</div>
<!-- STATUS BAR -->
<div class="a" style="left:0;top:993.600px;width:1920px;height:26.400px;background:#0078d4"></div>
<svg style="left:15.500px;top:998.500px" width="13" height="15" viewBox="0 0 13 15"><path d="M1 5.300l5.200 4.600L1 14.500M12 .5L6.800 5.100 12 9.700" fill="none" stroke="#fff" stroke-width="1.400"></path></svg>
<span class="t" style="left: 34.5px; top: 993px; font-size: 15px; color: rgb(255, 255, 255); height: 27px; line-height: 27px; letter-spacing: -0.59px;">SSH: 192.168.138.131</span>
<svg style="left:198px;top:998.500px" width="16" height="16" viewBox="0 0 16 16"><circle cx="8" cy="8" r="7" fill="none" stroke="#fff" stroke-width="1.300"></circle><path d="M5.200 5.200l5.600 5.600M10.800 5.200l-5.600 5.600" stroke="#fff" stroke-width="1.300" fill="none"></path></svg>
<span class="t" style="left:219.500px;top:993px;font-size:15px;color:#fff;height:27px;line-height:27px">3</span>
<svg style="left:232.500px;top:998.500px" width="16" height="15" viewBox="0 0 16 15"><path d="M8 1.200L15 13.800H1z" fill="none" stroke="#fff" stroke-width="1.300" stroke-linejoin="round"></path><path d="M8 5.500v4.500M8 11.200v1.400" stroke="#fff" stroke-width="1.300"></path></svg>
<span class="t" style="left:252px;top:993px;font-size:15px;color:#fff;height:27px;line-height:27px">0</span>
<svg style="left:282.500px;top:998px" width="16" height="16" viewBox="0 0 16 16"><circle cx="8" cy="5.500" r="1.500" fill="none" stroke="#fff" stroke-width="1.200"></circle><path d="M8 7v2M4.500 15.500L8 8.500l3.500 7M5.800 13h4.400M4.800 2.300a4.500 4.500 0 0 0 0 6.400M11.200 2.300a4.500 4.500 0 0 1 0 6.400M2.600.6a7 7 0 0 0 0 9.800M13.400.6a7 7 0 0 1 0 9.800" fill="none" stroke="#fff" stroke-width="1.200"></path></svg>
<span class="t" style="left:301.500px;top:993px;font-size:15px;color:#fff;height:27px;line-height:27px">0</span>
<svg style="left:329.500px;top:997.500px" width="18" height="18" viewBox="0 0 18 18"><path d="M6.500 8.500V1.800L16.600 7.700l-5.600 3.300" fill="none" stroke="#fff" stroke-width="1.300" stroke-linejoin="round"></path><ellipse cx="5.800" cy="13.200" rx="2.600" ry="3.300" fill="none" stroke="#fff" stroke-width="1.200"></ellipse><path d="M3.200 13.200h5.200M3.900 10.500L2 9M7.700 10.500L9.600 9M3.200 12.300H1.300M8.400 12.300h1.900M3.600 15.500L1.800 17M8 15.500l1.800 1.500" fill="none" stroke="#fff" stroke-width="1.100"></path></svg>
<span class="t" style="left: 352.5px; top: 993px; font-size: 15px; color: rgb(255, 255, 255); height: 27px; line-height: 27px; letter-spacing: -0.094px;">(gdb) Launch (php-src)</span>
<span class="t" style="left: 1442px; top: 993px; font-size: 15px; color: rgb(255, 255, 255); height: 27px; line-height: 27px; letter-spacing: -0.327px;">Ln 3270, Col 1</span>
<span class="t" style="left: 1555px; top: 993px; font-size: 15px; color: rgb(255, 255, 255); height: 27px; line-height: 27px; letter-spacing: -0.474px;">Tab Size: 4</span>
<span class="t" style="left: 1644px; top: 993px; font-size: 15px; color: rgb(255, 255, 255); height: 27px; line-height: 27px; letter-spacing: -0.6px;">UTF-8</span>
<span class="t" style="left: 1704px; top: 993px; font-size: 15px; color: rgb(255, 255, 255); height: 27px; line-height: 27px; letter-spacing: -1.758px;">LF</span>
<span class="t" style="left:1739px;top:992px;font-size:15px;color:#fff;height:27px;line-height:27px;letter-spacing:1px">{}</span>
<span class="t" style="left:1762.500px;top:993px;font-size:15px;color:#fff;height:27px;line-height:27px">C</span>
<!-- copilot -->
<svg style="left:1791.500px;top:998.500px" width="19" height="16" viewBox="0 0 19 16"><path d="M9.500 3.500C8.500 1.500 5.500 1 3.800 2.200 2.300 3.300 2.300 5.500 2.800 6.800 1.500 7.800 1 9 1 10.500c0 1.500 3.500 4.500 8.500 4.500s8.500-3 8.500-4.500c0-1.500-.5-2.700-1.800-3.700.5-1.300.5-3.500-1-4.600C13.500 1 10.500 1.500 9.500 3.500z" fill="none" stroke="#fff" stroke-width="2" stroke-linejoin="round"></path><path d="M7 9.500v2.200M12 9.500v2.200" stroke="#fff" stroke-width="1.800" stroke-linecap="round"></path></svg>
<span class="t" style="left: 1829px; top: 993px; font-size: 15px; color: rgb(255, 255, 255); height: 27px; line-height: 27px; letter-spacing: -0.072px;">Linux</span>
<svg style="left:1885.500px;top:998px" width="15" height="17" viewBox="0 0 15 17"><path d="M7.500 1a5 5 0 0 0-5 5v4.200L1 12.800h13l-1.500-2.600V6a5 5 0 0 0-5-5zM5.800 13.200a1.800 1.800 0 0 0 3.400 0" fill="none" stroke="#fff" stroke-width="1.300" stroke-linejoin="round"></path></svg>

</body></html>
